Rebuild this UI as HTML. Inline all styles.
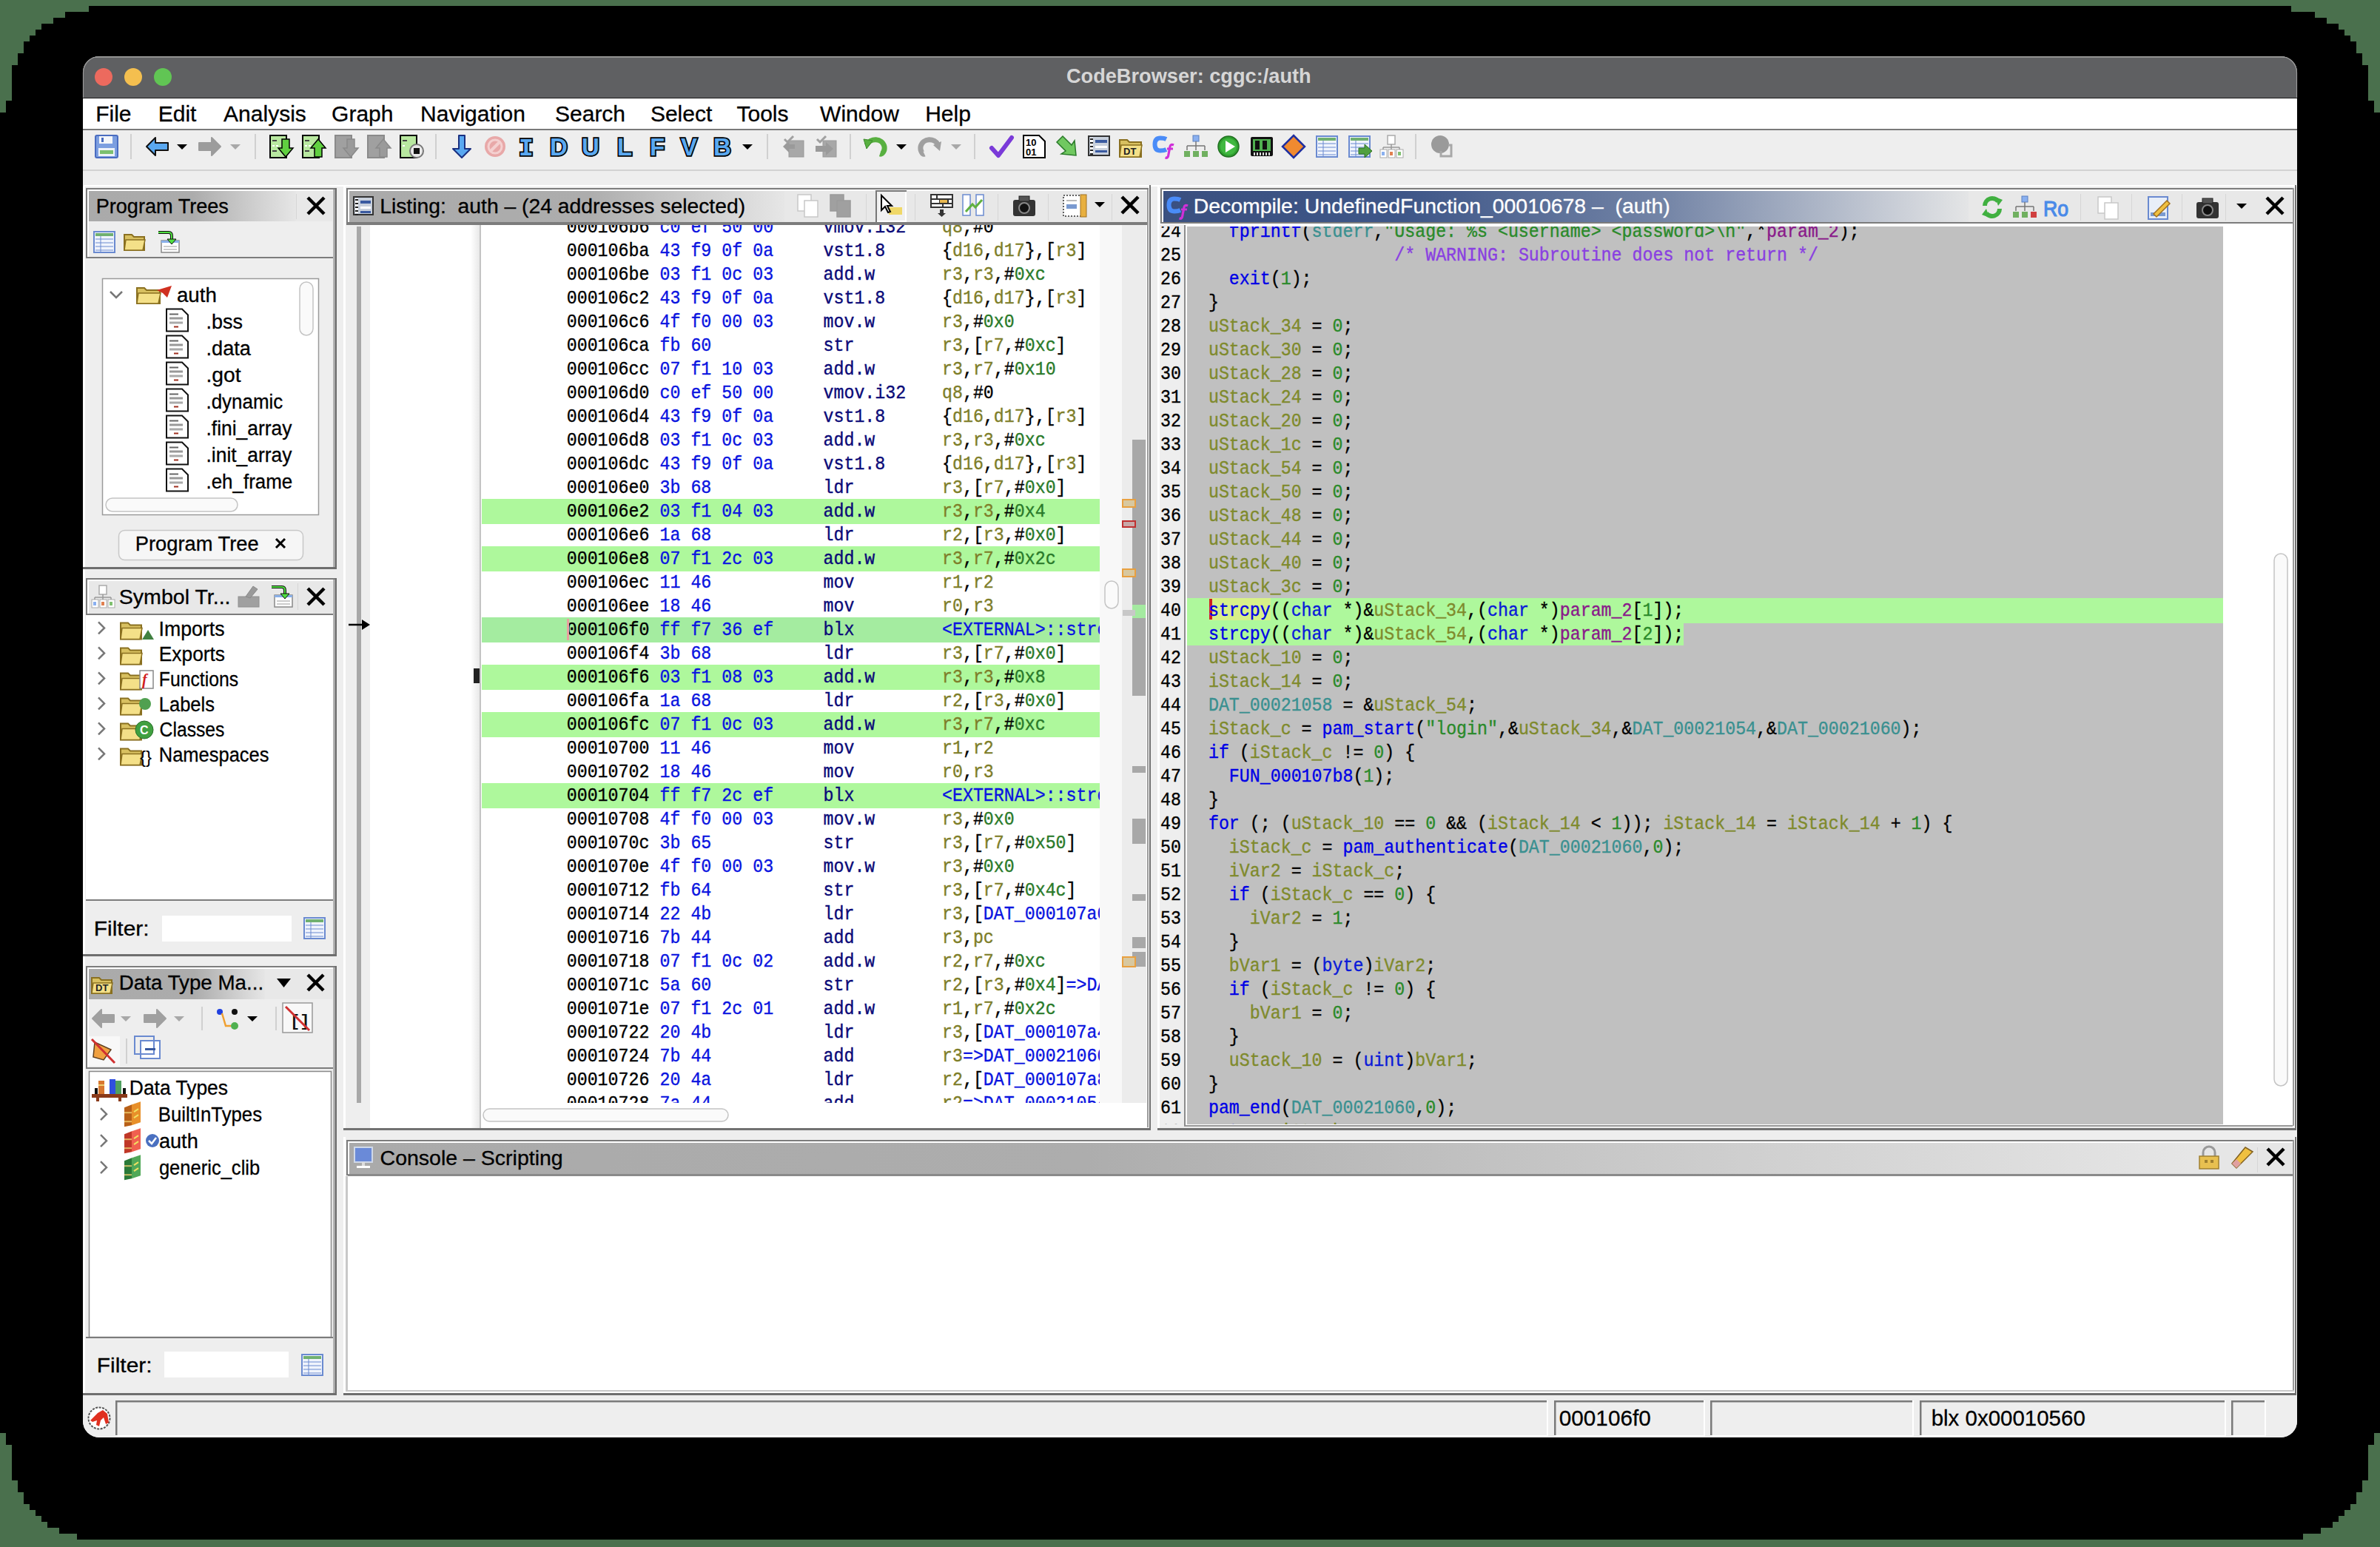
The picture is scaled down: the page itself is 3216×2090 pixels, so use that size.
<!DOCTYPE html>
<html><head><meta charset="utf-8"><title>CodeBrowser</title>
<style>html,body{margin:0;padding:0;background:#4d7250;overflow:hidden;width:3216px;height:2090px}svg{display:block;font-family:"Liberation Sans",sans-serif}</style>
</head><body>
<svg width="3216" height="2090" viewBox="0 0 3216 2090"><rect x="0" y="0" width="3216" height="2090" fill="#4a704d" />
<polygon fill="#000" points="120,8 120,16 88,16 88,24 72,24 72,32 56,32 56,40 48,40 48,48 40,48 40,56 32,56 32,72 24,72 24,88 16,88 16,136 8,136 8,152 0,152 0,1936 8,1936 8,1952 16,1952 16,2000 24,2000 24,2016 32,2016 32,2032 40,2032 40,2040 48,2040 48,2048 56,2048 56,2056 64,2056 64,2064 80,2064 80,2072 104,2072 104,2080 3112,2080 3112,2072 3136,2072 3136,2064 3152,2064 3152,2056 3160,2056 3160,2048 3168,2048 3168,2040 3176,2040 3176,2032 3184,2032 3184,2016 3192,2016 3192,2000 3200,2000 3200,1952 3208,1952 3208,1936 3216,1936 3216,152 3208,152 3208,136 3200,136 3200,88 3192,88 3192,72 3184,72 3184,56 3176,56 3176,48 3168,48 3168,40 3160,40 3160,32 3144,32 3144,24 3128,24 3128,16 3096,16 3096,8"/>
<defs><clipPath id="win"><rect x="112" y="76" width="2992" height="1866" rx="22" ry="22"/></clipPath><linearGradient id="hdrGray" x1="0" x2="1" y1="0" y2="0"><stop offset="0" stop-color="#a9a9a9"/><stop offset="0.45" stop-color="#ababab"/><stop offset="1" stop-color="#e8e8e8"/></linearGradient><linearGradient id="hdrBlue" x1="0" x2="1" y1="0" y2="0"><stop offset="0" stop-color="#3a5080"/><stop offset="0.3" stop-color="#40588a"/><stop offset="1" stop-color="#e6e6e6"/></linearGradient></defs>
<g clip-path="url(#win)">
<rect x="112" y="76" width="2992" height="1866" fill="#eeeeee" />
<rect x="112" y="76" width="2992" height="56" fill="#5f6062" />
<rect x="112" y="76" width="2992" height="2" fill="#8e8e8e" />
<circle cx="140" cy="104" r="12" fill="#ec6a5e"/>
<circle cx="180" cy="104" r="12" fill="#f4bf4f"/>
<circle cx="220" cy="104" r="12" fill="#61c554"/>
<text xml:space="preserve" x="1440.9" y="112" font-family="'Liberation Sans'" font-size="27" font-weight="bold" fill="#d6d6d6" textLength="330.8" lengthAdjust="spacingAndGlyphs" >CodeBrowser: cggc:/auth</text>
<rect x="112" y="132" width="2992" height="1" fill="#1a1a1a" />
<rect x="112" y="133" width="2992" height="41" fill="#ffffff" />
<rect x="112" y="174" width="2992" height="2" fill="#7a7a7a" />
<text xml:space="preserve" x="129.2" y="164" font-family="'Liberation Sans'" font-size="30" fill="#000" stroke="#000" stroke-width="0.3" >File</text>
<text xml:space="preserve" x="213.7" y="164" font-family="'Liberation Sans'" font-size="30" fill="#000" stroke="#000" stroke-width="0.3" >Edit</text>
<text xml:space="preserve" x="302.1" y="164" font-family="'Liberation Sans'" font-size="30" fill="#000" stroke="#000" stroke-width="0.3" >Analysis</text>
<text xml:space="preserve" x="448.1" y="164" font-family="'Liberation Sans'" font-size="30" fill="#000" stroke="#000" stroke-width="0.3" >Graph</text>
<text xml:space="preserve" x="568.1" y="164" font-family="'Liberation Sans'" font-size="30" fill="#000" stroke="#000" stroke-width="0.3" >Navigation</text>
<text xml:space="preserve" x="750.0" y="164" font-family="'Liberation Sans'" font-size="30" fill="#000" stroke="#000" stroke-width="0.3" >Search</text>
<text xml:space="preserve" x="878.9" y="164" font-family="'Liberation Sans'" font-size="30" fill="#000" stroke="#000" stroke-width="0.3" >Select</text>
<text xml:space="preserve" x="995.5" y="164" font-family="'Liberation Sans'" font-size="30" fill="#000" stroke="#000" stroke-width="0.3" >Tools</text>
<text xml:space="preserve" x="1108.1" y="164" font-family="'Liberation Sans'" font-size="30" fill="#000" stroke="#000" stroke-width="0.3" >Window</text>
<text xml:space="preserve" x="1250.2" y="164" font-family="'Liberation Sans'" font-size="30" fill="#000" stroke="#000" stroke-width="0.3" >Help</text>
<rect x="112" y="176" width="2992" height="53" fill="#eeeeee" />
<rect x="112" y="229" width="2992" height="2" fill="#d2d2d2" />
<g transform="translate(128,182)"><rect x="1" y="1" width="30" height="30" rx="2" fill="#7c9ee0" stroke="#4a6cc0" stroke-width="2"/><rect x="6" y="2" width="18" height="10" fill="#f4f6fa"/><rect x="9" y="4" width="3" height="6" fill="#4a6cc0"/><rect x="5" y="18" width="22" height="11" fill="#eef2f8"/><rect x="7" y="21" width="18" height="5" fill="#7cc070"/></g>
<rect x="176" y="181" width="2" height="34" fill="#d0d0d0"/>
<g transform="translate(196,182)"><polygon points="2,16 14,4 14,11 31,11 31,21 14,21 14,28" fill="#5aa8f0" stroke="#111" stroke-width="2" stroke-linejoin="round"/></g>
<g transform="translate(239,195)"><polygon points="0,0 14,0 7,7" fill="#000"/></g>
<g transform="translate(268,182)"><polygon points="30,16 18,4 18,11 1,11 1,21 18,21 18,28" fill="#9c9c9c" stroke="#9c9c9c" stroke-width="2" stroke-linejoin="round"/></g>
<g transform="translate(311,195)"><polygon points="0,0 14,0 7,7" fill="#a8a8a8"/></g>
<rect x="344" y="181" width="2" height="34" fill="#d0d0d0"/>
<g transform="translate(364,182)"><rect x="1" y="1" width="22" height="30" fill="#b8e8a0" stroke="#000" stroke-width="2"/><rect x="4" y="7" width="6" height="2" fill="#444"/><rect x="4" y="14" width="3" height="2" fill="#fff"/><rect x="9" y="14" width="3" height="2" fill="#fff"/><rect x="4" y="21" width="6" height="2" fill="#444"/><polygon points="17,6 27,6 27,18 32,18 22,30 12,18 17,18" fill="#60d040" stroke="#000" stroke-width="1.5"/></g>
<g transform="translate(408,182)"><rect x="1" y="1" width="22" height="30" fill="#b8e8a0" stroke="#000" stroke-width="2"/><rect x="4" y="7" width="6" height="2" fill="#444"/><rect x="4" y="14" width="3" height="2" fill="#fff"/><rect x="9" y="14" width="3" height="2" fill="#fff"/><rect x="4" y="21" width="6" height="2" fill="#444"/><polygon points="22,6 32,18 27,18 27,30 17,30 17,18 12,18" fill="#60d040" stroke="#000" stroke-width="1.5"/></g>
<g transform="translate(452,182)"><rect x="1" y="1" width="22" height="30" fill="#a0a0a0" stroke="#8a8a8a" stroke-width="2"/><polygon points="17,6 27,6 27,18 32,18 22,30 12,18 17,18" fill="#9a9a9a" stroke="#8a8a8a" stroke-width="1.5"/></g>
<g transform="translate(496,182)"><rect x="1" y="1" width="22" height="30" fill="#a0a0a0" stroke="#8a8a8a" stroke-width="2"/><polygon points="22,6 32,18 27,18 27,30 17,30 17,18 12,18" fill="#9a9a9a" stroke="#8a8a8a" stroke-width="1.5"/></g>
<g transform="translate(540,182)"><rect x="1" y="1" width="22" height="30" fill="#b8e8a0" stroke="#000" stroke-width="2"/><rect x="4" y="7" width="6" height="2" fill="#444"/><rect x="4" y="14" width="3" height="2" fill="#fff"/><circle cx="23" cy="22" r="9" fill="#e8e8e8" stroke="#777" stroke-width="2"/><rect x="19" y="18" width="8" height="8" fill="#111"/></g>
<rect x="588" y="181" width="2" height="34" fill="#d0d0d0"/>
<g transform="translate(611,182)"><polygon points="9,1 17,1 17,19 25,19 13,31 1,19 9,19" fill="#5aa8f0" stroke="#1a3080" stroke-width="2" stroke-linejoin="round"/></g>
<g transform="translate(654,182)"><circle cx="15" cy="16" r="14" fill="#e8a8a8"/><circle cx="15" cy="16" r="9" fill="none" stroke="#f4d0d0" stroke-width="3"/><line x1="9" y1="22" x2="21" y2="10" stroke="#f4d0d0" stroke-width="4"/></g>
<text x="701" y="210" font-family="'Liberation Mono'" font-weight="bold" font-size="33" fill="#5aa8f0" stroke="#000" stroke-width="3.5" paint-order="stroke" >I</text>
<text x="743" y="210" font-family="'Liberation Sans'" font-weight="bold" font-size="33" fill="#5aa8f0" stroke="#000" stroke-width="3.5" paint-order="stroke" >D</text>
<text x="786" y="210" font-family="'Liberation Sans'" font-weight="bold" font-size="33" fill="#5aa8f0" stroke="#000" stroke-width="3.5" paint-order="stroke" >U</text>
<text x="834" y="210" font-family="'Liberation Sans'" font-weight="bold" font-size="33" fill="#5aa8f0" stroke="#000" stroke-width="3.5" paint-order="stroke" >L</text>
<text x="878" y="210" font-family="'Liberation Sans'" font-weight="bold" font-size="33" fill="#5aa8f0" stroke="#000" stroke-width="3.5" paint-order="stroke" >F</text>
<text x="920" y="210" font-family="'Liberation Sans'" font-weight="bold" font-size="33" fill="#5aa8f0" stroke="#000" stroke-width="3.5" paint-order="stroke" >V</text>
<text x="964" y="210" font-family="'Liberation Sans'" font-weight="bold" font-size="33" fill="#5aa8f0" stroke="#000" stroke-width="3.5" paint-order="stroke" >B</text>
<g transform="translate(1003,195)"><polygon points="0,0 14,0 7,7" fill="#000"/></g>
<rect x="1036" y="181" width="2" height="34" fill="#d0d0d0"/>
<g transform="translate(1056,182)"><rect x="10" y="8" width="20" height="22" fill="#a8a8a8" stroke="#999" stroke-width="1"/><polygon points="2,16 10,8 10,13 18,13 18,19 10,19 10,24" fill="#9a9a9a"/><path d="M4 6 l4 4 l8 -8" stroke="#a0a0a0" stroke-width="3" fill="none"/></g>
<g transform="translate(1100,182)"><rect x="12" y="8" width="18" height="22" fill="#a8a8a8" stroke="#999" stroke-width="1"/><polygon points="26,19 16,10 16,15 2,15 2,23 16,23 16,28" fill="#9a9a9a"/><path d="M4 6 l4 4 l8 -8" stroke="#a0a0a0" stroke-width="3" fill="none"/></g>
<rect x="1148" y="181" width="2" height="34" fill="#d0d0d0"/>
<g transform="translate(1167,182)"><path d="M4 14 C 9 4, 25 4, 28 16 C 29 22, 25 27, 22 26" fill="none" stroke="#58b040" stroke-width="7"/><polygon points="0,6 12,8 4,19" fill="#58b040" stroke="#3a8a2a" stroke-width="1"/></g>
<g transform="translate(1211,195)"><polygon points="0,0 14,0 7,7" fill="#000"/></g>
<g transform="translate(1239,182)"><path d="M29 14 C 24 4, 8 4, 5 16 C 4 22, 8 27, 10 26" fill="none" stroke="#a0a0a0" stroke-width="7"/><polygon points="22,14 33,9 31,22" fill="#a0a0a0"/></g>
<g transform="translate(1285,195)"><polygon points="0,0 14,0 7,7" fill="#a8a8a8"/></g>
<rect x="1316" y="181" width="2" height="34" fill="#d0d0d0"/>
<g transform="translate(1337,182)"><path d="M3 18 L12 28 L30 4" fill="none" stroke="#7a3ad8" stroke-width="6" stroke-linecap="round" stroke-linejoin="round"/></g>
<g transform="translate(1382,182)"><path d="M1 1 H22 L30 9 V31 H1 Z" fill="#fff" stroke="#000" stroke-width="2"/><text x="4" y="15" font-family="'Liberation Sans'" font-weight="bold" font-size="13" fill="#000">10</text><text x="4" y="28" font-family="'Liberation Sans'" font-weight="bold" font-size="13" fill="#000">01</text></g>
<g transform="translate(1426,182)"><polygon points="2,10 10,2 22,14 26,8 28,28 8,26 14,22" fill="#70c860" stroke="#2a7a2a" stroke-width="1.5"/></g>
<g transform="translate(1470,182)"><rect x="1" y="2" width="28" height="26" fill="#c8d0dc" stroke="#333" stroke-width="2"/><rect x="3" y="4" width="4" height="22" fill="#fff"/><rect x="3" y="5" width="4" height="2" fill="#222"/><rect x="3" y="10" width="4" height="2" fill="#222"/><rect x="3" y="15" width="4" height="2" fill="#222"/><rect x="3" y="20" width="4" height="2" fill="#222"/><rect x="3" y="25" width="4" height="2" fill="#222"/><rect x="10" y="7" width="16" height="4" fill="#3a5aa0"/><rect x="10" y="15" width="16" height="3" fill="#fff"/><rect x="10" y="21" width="16" height="3" fill="#3a5aa0"/></g>
<g transform="translate(1512,184)"><path d="M1 5 H11 L14 8 H30 V28 H1 Z" fill="#d8c060" stroke="#8a7020" stroke-width="2"/><path d="M3 12 H31 L28 28 H1 Z" fill="#f4e088" stroke="#8a7020" stroke-width="1.5"/><text x="6" y="25" font-family="'Liberation Sans'" font-weight="bold" font-size="13" fill="#222">DT</text></g>
<g transform="translate(1557,182)"><path d="M19 6 Q16 4.5 11 4.5 Q3.5 4.5 3.5 13 Q3.5 21.5 11 21.5 Q16 21.5 19 20" fill="none" stroke="#4a8cf8" stroke-width="6"/><path d="M29 14 Q25 12 24 16 L21.5 29 Q20.5 32 17.5 31" fill="none" stroke="#d030d8" stroke-width="3.2"/><path d="M20 19 H28" stroke="#d030d8" stroke-width="2.8"/></g>
<g transform="translate(1599,182)"><rect x="13" y="1" width="8" height="8" fill="#8ab0f0" stroke="#5a80c0" stroke-width="1"/><path d="M17 9 V15 M5 15 H29 M5 15 V21 M17 15 V21 M29 15 V21" stroke="#777" stroke-width="1.5" fill="none"/><rect x="1" y="22" width="8" height="8" fill="#70b060"/><rect x="13" y="22" width="8" height="8" fill="#70b060"/><rect x="25" y="22" width="8" height="8" fill="#70b060"/></g>
<g transform="translate(1645,182)"><circle cx="15" cy="16" r="14" fill="#30a030" stroke="#207020" stroke-width="1.5"/><circle cx="15" cy="16" r="11" fill="#40b840"/><polygon points="11,8 24,16 11,24" fill="#fff"/></g>
<g transform="translate(1689,182)"><rect x="1" y="3" width="30" height="26" fill="#111" rx="2"/><rect x="4" y="6" width="24" height="16" fill="#50b050"/><rect x="7" y="8" width="6" height="12" fill="#111"/><rect x="17" y="8" width="6" height="12" fill="#111"/><rect x="5" y="24" width="2" height="4" fill="#ddd"/><rect x="9" y="24" width="2" height="4" fill="#ddd"/><rect x="13" y="24" width="2" height="4" fill="#ddd"/><rect x="17" y="24" width="2" height="4" fill="#ddd"/><rect x="21" y="24" width="2" height="4" fill="#ddd"/><rect x="25" y="24" width="2" height="4" fill="#ddd"/></g>
<g transform="translate(1732,182)"><polygon points="16,1 31,16 16,31 1,16" fill="#f08a30" stroke="#2030a0" stroke-width="2.5"/></g>
<g transform="translate(1778,182)"><rect x="1" y="2" width="28" height="28" fill="#f0f4fc" stroke="#6a8ad0" stroke-width="2"/><rect x="3" y="4" width="24" height="4" fill="#70b070"/><line x1="3" y1="12" x2="27" y2="12" stroke="#6a8ad0" stroke-width="1"/><line x1="3" y1="17" x2="27" y2="17" stroke="#6a8ad0" stroke-width="1"/><line x1="3" y1="22" x2="27" y2="22" stroke="#6a8ad0" stroke-width="1"/><line x1="3" y1="27" x2="27" y2="27" stroke="#6a8ad0" stroke-width="1"/><line x1="10" y1="8" x2="10" y2="29" stroke="#6a8ad0" stroke-width="1"/></g>
<g transform="translate(1822,182)"><rect x="1" y="2" width="28" height="28" fill="#f0f4fc" stroke="#6a8ad0" stroke-width="2"/><rect x="3" y="4" width="24" height="4" fill="#70b070"/><line x1="3" y1="12" x2="27" y2="12" stroke="#6a8ad0" stroke-width="1"/><line x1="3" y1="17" x2="27" y2="17" stroke="#6a8ad0" stroke-width="1"/><line x1="3" y1="22" x2="27" y2="22" stroke="#6a8ad0" stroke-width="1"/><line x1="3" y1="27" x2="27" y2="27" stroke="#6a8ad0" stroke-width="1"/><line x1="10" y1="8" x2="10" y2="29" stroke="#6a8ad0" stroke-width="1"/><polygon points="14,18 22,18 22,13 32,22 22,31 22,26 14,26" fill="#50a040" stroke="#2a7020" stroke-width="1"/></g>
<g transform="translate(1864,182)"><rect x="11" y="1" width="10" height="12" fill="#fff" stroke="#aaa" stroke-width="1.5"/><path d="M16 13 V17 M5 17 H27 M5 17 V20 M16 17 V20 M27 17 V20" stroke="#999" stroke-width="1.5" fill="none"/><rect x="1" y="20" width="9" height="11" fill="#fff" stroke="#aaa" stroke-width="1"/><rect x="3" y="23" width="4" height="5" fill="#8ab0f0"/><rect x="12" y="20" width="9" height="11" fill="#fff" stroke="#aaa" stroke-width="1"/><rect x="14" y="23" width="4" height="5" fill="#e08050"/><rect x="23" y="20" width="9" height="11" fill="#fff" stroke="#aaa" stroke-width="1"/><rect x="25" y="23" width="4" height="5" fill="#80c070"/></g>
<rect x="1912" y="181" width="2" height="34" fill="#d0d0d0"/>
<g transform="translate(1933,182)"><circle cx="13" cy="13" r="12" fill="#9a9a9a"/><path d="M14 22 V29 H28 V14 H24" stroke="#a8a8a8" stroke-width="3" fill="none"/></g>
<rect x="113" y="250" width="2991" height="2" fill="#ffffff" />
<rect x="112" y="252" width="3" height="1638" fill="#ffffff" />
<rect x="116" y="254" width="339" height="2" fill="#7c7c7c" />
<rect x="116" y="254" width="2" height="95" fill="#7c7c7c" />
<rect x="118" y="256" width="335" height="2" fill="#ffffff" />
<rect x="118" y="256" width="2" height="93" fill="#ffffff" />
<rect x="450" y="256" width="2.5" height="510" fill="#b4b4b4" />
<rect x="452.5" y="254" width="2.5" height="515" fill="#6e6e6e" />
<rect x="112" y="766" width="343" height="3" fill="#6e6e6e" />
<linearGradient id="gPT" gradientUnits="userSpaceOnUse" x1="120" x2="400" y1="0" y2="0"><stop offset="0" stop-color="#aaaaaa"/><stop offset="0.5" stop-color="#acacac"/><stop offset="1" stop-color="#e6e6e6"/></linearGradient>
<rect x="120" y="258" width="329" height="41" fill="url(#gPT)" />
<rect x="400" y="258" width="49" height="41" fill="#e8e8e8" />
<rect x="400" y="262" width="1" height="34" fill="#d6d6d6" />
<text xml:space="preserve" x="129.7" y="288" font-family="'Liberation Sans'" font-size="27" fill="#000" stroke="#000" stroke-width="0.3" textLength="179.2" lengthAdjust="spacingAndGlyphs" >Program Trees</text>
<path d="M416 267 L438 289 M438 267 L416 289" stroke="#000" stroke-width="4.5"/>
<rect x="120" y="299" width="329" height="48" fill="#eeeeee" />
<rect x="116" y="347" width="334" height="2" fill="#7c7c7c" />
<g transform="translate(126,311)"><rect x="1" y="2" width="28" height="28" fill="#f0f4fc" stroke="#6a8ad0" stroke-width="2"/><rect x="3" y="4" width="24" height="4" fill="#70b070"/><line x1="3" y1="12" x2="27" y2="12" stroke="#6a8ad0" stroke-width="1"/><line x1="3" y1="17" x2="27" y2="17" stroke="#6a8ad0" stroke-width="1"/><line x1="3" y1="22" x2="27" y2="22" stroke="#6a8ad0" stroke-width="1"/><line x1="3" y1="27" x2="27" y2="27" stroke="#6a8ad0" stroke-width="1"/><line x1="10" y1="8" x2="10" y2="29" stroke="#6a8ad0" stroke-width="1"/></g>
<g transform="translate(167,312)"><path d="M1 5 H11 L14 8 H28 V26 H1 Z" fill="#d8c060" stroke="#8a7020" stroke-width="2"/><path d="M3 12 H29 L26 26 H1 Z" fill="#f4e088" stroke="#8a7020" stroke-width="1.5"/></g>
<g transform="translate(212,311)"><rect x="6" y="14" width="24" height="16" fill="#fff" stroke="#888" stroke-width="1.5"/><rect x="6" y="14" width="24" height="3" fill="#8ab0e8"/><line x1="9" y1="22" x2="27" y2="22" stroke="#bbb" stroke-width="1.5"/><line x1="9" y1="26" x2="27" y2="26" stroke="#bbb" stroke-width="1.5"/><path d="M2 3 H16 Q20 3 20 8 V14" stroke="#111" stroke-width="4" fill="none"/><path d="M2 3 H16 Q20 3 20 8 V14" stroke="#50e040" stroke-width="2" fill="none"/><polygon points="14,12 26,12 20,19" fill="#50e040" stroke="#111" stroke-width="1"/></g>
<rect x="138" y="376" width="293" height="320" fill="#ffffff" />
<rect x="138.5" y="376.5" width="292" height="319" fill="none" stroke="#9a9a9a" stroke-width="1.5"/>
<path d="M149 394 L157 402 L165 394" stroke="#777" stroke-width="2.5" fill="none"/>
<g transform="translate(184,384)"><path d="M1 5 H11 L14 8 H32 V26 H1 Z" fill="#d8c060" stroke="#8a7020" stroke-width="2"/><path d="M3 12 H33 L30 26 H1 Z" fill="#f4e088" stroke="#8a7020" stroke-width="1.5"/></g>
<polygon points="212,392 232,386 226,402 220,396" fill="#d03020"/>
<text xml:space="preserve" x="238.9" y="407.5" font-family="'Liberation Sans'" font-size="27" fill="#000" stroke="#000" stroke-width="0.3" textLength="53.9" lengthAdjust="spacingAndGlyphs" >auth</text>
<g transform="translate(224,416.5)"><path d="M1 1 H22 L30 9 V31 H1 Z" fill="#fff" stroke="#111" stroke-width="2"/><rect x="5" y="7" width="12" height="2" fill="#666"/><rect x="5" y="12" width="18" height="3" fill="#999"/><rect x="5" y="18" width="18" height="3" fill="#aaa"/><rect x="11" y="24" width="6" height="2" fill="#a03020"/></g>
<text xml:space="preserve" x="278.5" y="443.5" font-family="'Liberation Sans'" font-size="27" fill="#000" stroke="#000" stroke-width="0.3" textLength="49.4" lengthAdjust="spacingAndGlyphs" >.bss</text>
<g transform="translate(224,452.5)"><path d="M1 1 H22 L30 9 V31 H1 Z" fill="#fff" stroke="#111" stroke-width="2"/><rect x="5" y="7" width="12" height="2" fill="#666"/><rect x="5" y="12" width="18" height="3" fill="#999"/><rect x="5" y="18" width="18" height="3" fill="#aaa"/><rect x="11" y="24" width="6" height="2" fill="#a03020"/></g>
<text xml:space="preserve" x="278.5" y="479.5" font-family="'Liberation Sans'" font-size="27" fill="#000" stroke="#000" stroke-width="0.3" textLength="60.5" lengthAdjust="spacingAndGlyphs" >.data</text>
<g transform="translate(224,488.5)"><path d="M1 1 H22 L30 9 V31 H1 Z" fill="#fff" stroke="#111" stroke-width="2"/><rect x="5" y="7" width="12" height="2" fill="#666"/><rect x="5" y="12" width="18" height="3" fill="#999"/><rect x="5" y="18" width="18" height="3" fill="#aaa"/><rect x="11" y="24" width="6" height="2" fill="#a03020"/></g>
<text xml:space="preserve" x="278.5" y="515.5" font-family="'Liberation Sans'" font-size="27" fill="#000" stroke="#000" stroke-width="0.3" textLength="47.2" lengthAdjust="spacingAndGlyphs" >.got</text>
<g transform="translate(224,524.5)"><path d="M1 1 H22 L30 9 V31 H1 Z" fill="#fff" stroke="#111" stroke-width="2"/><rect x="5" y="7" width="12" height="2" fill="#666"/><rect x="5" y="12" width="18" height="3" fill="#999"/><rect x="5" y="18" width="18" height="3" fill="#aaa"/><rect x="11" y="24" width="6" height="2" fill="#a03020"/></g>
<text xml:space="preserve" x="278.5" y="551.5" font-family="'Liberation Sans'" font-size="27" fill="#000" stroke="#000" stroke-width="0.3" textLength="103.7" lengthAdjust="spacingAndGlyphs" >.dynamic</text>
<g transform="translate(224,560.5)"><path d="M1 1 H22 L30 9 V31 H1 Z" fill="#fff" stroke="#111" stroke-width="2"/><rect x="5" y="7" width="12" height="2" fill="#666"/><rect x="5" y="12" width="18" height="3" fill="#999"/><rect x="5" y="18" width="18" height="3" fill="#aaa"/><rect x="11" y="24" width="6" height="2" fill="#a03020"/></g>
<text xml:space="preserve" x="278.5" y="587.5" font-family="'Liberation Sans'" font-size="27" fill="#000" stroke="#000" stroke-width="0.3" textLength="115.9" lengthAdjust="spacingAndGlyphs" >.fini_array</text>
<g transform="translate(224,596.5)"><path d="M1 1 H22 L30 9 V31 H1 Z" fill="#fff" stroke="#111" stroke-width="2"/><rect x="5" y="7" width="12" height="2" fill="#666"/><rect x="5" y="12" width="18" height="3" fill="#999"/><rect x="5" y="18" width="18" height="3" fill="#aaa"/><rect x="11" y="24" width="6" height="2" fill="#a03020"/></g>
<text xml:space="preserve" x="278.5" y="623.5" font-family="'Liberation Sans'" font-size="27" fill="#000" stroke="#000" stroke-width="0.3" textLength="115.9" lengthAdjust="spacingAndGlyphs" >.init_array</text>
<g transform="translate(224,632.5)"><path d="M1 1 H22 L30 9 V31 H1 Z" fill="#fff" stroke="#111" stroke-width="2"/><rect x="5" y="7" width="12" height="2" fill="#666"/><rect x="5" y="12" width="18" height="3" fill="#999"/><rect x="5" y="18" width="18" height="3" fill="#aaa"/><rect x="11" y="24" width="6" height="2" fill="#a03020"/></g>
<text xml:space="preserve" x="278.5" y="659.5" font-family="'Liberation Sans'" font-size="27" fill="#000" stroke="#000" stroke-width="0.3" textLength="116.7" lengthAdjust="spacingAndGlyphs" >.eh_frame</text>
<rect x="405" y="381" width="18" height="72" rx="9" fill="#fafafa" stroke="#c4c4c4" stroke-width="1.5"/>
<rect x="143" y="673" width="178" height="18" rx="9" fill="#fafafa" stroke="#c4c4c4" stroke-width="1.5"/>
<rect x="160.5" y="716.5" width="249" height="40" rx="8" fill="#f6f6f6" stroke="#c8c8c8" stroke-width="1.5"/>
<text xml:space="preserve" x="182.8" y="744" font-family="'Liberation Sans'" font-size="27" fill="#000" stroke="#000" stroke-width="0.3" textLength="166.8" lengthAdjust="spacingAndGlyphs" >Program Tree</text>
<path d="M373 728 L385 740 M385 728 L373 740" stroke="#000" stroke-width="3"/>
<rect x="116" y="781" width="339" height="2" fill="#7c7c7c" />
<rect x="116" y="781" width="2" height="50" fill="#7c7c7c" />
<rect x="118" y="783" width="335" height="2" fill="#ffffff" />
<rect x="118" y="783" width="2" height="48" fill="#ffffff" />
<rect x="450" y="783" width="2.5" height="506" fill="#b4b4b4" />
<rect x="452.5" y="781" width="2.5" height="511" fill="#6e6e6e" />
<rect x="112" y="1289" width="343" height="3" fill="#6e6e6e" />
<rect x="120" y="785" width="329" height="45" fill="#e8e8e8" />
<g transform="translate(123,790)"><rect x="11" y="1" width="10" height="12" fill="#fff" stroke="#aaa" stroke-width="1.5"/><path d="M16 13 V17 M5 17 H27 M5 17 V20 M16 17 V20 M27 17 V20" stroke="#999" stroke-width="1.5" fill="none"/><rect x="1" y="20" width="9" height="11" fill="#fff" stroke="#aaa" stroke-width="1"/><rect x="3" y="23" width="4" height="5" fill="#8ab0f0"/><rect x="12" y="20" width="9" height="11" fill="#fff" stroke="#aaa" stroke-width="1"/><rect x="14" y="23" width="4" height="5" fill="#e08050"/><rect x="23" y="20" width="9" height="11" fill="#fff" stroke="#aaa" stroke-width="1"/><rect x="25" y="23" width="4" height="5" fill="#80c070"/></g>
<text xml:space="preserve" x="160.8" y="816" font-family="'Liberation Sans'" font-size="27" fill="#000" stroke="#000" stroke-width="0.3" textLength="150.7" lengthAdjust="spacingAndGlyphs" >Symbol Tr...</text>
<g transform="translate(320,790)"><rect x="2" y="16" width="28" height="14" fill="#a0a0a0" stroke="#909090" stroke-width="1"/><path d="M12 16 L22 2 L28 6 L18 18 Z" fill="#9a9a9a" stroke="#888" stroke-width="1"/></g>
<g transform="translate(365,790)"><rect x="6" y="14" width="24" height="16" fill="#fff" stroke="#888" stroke-width="1.5"/><rect x="6" y="14" width="24" height="3" fill="#8ab0e8"/><line x1="9" y1="22" x2="27" y2="22" stroke="#bbb" stroke-width="1.5"/><line x1="9" y1="26" x2="27" y2="26" stroke="#bbb" stroke-width="1.5"/><path d="M2 3 H16 Q20 3 20 8 V14" stroke="#111" stroke-width="4" fill="none"/><path d="M2 3 H16 Q20 3 20 8 V14" stroke="#50e040" stroke-width="2" fill="none"/><polygon points="14,12 26,12 20,19" fill="#50e040" stroke="#111" stroke-width="1"/></g>
<rect x="402" y="788" width="1" height="36" fill="#d6d6d6" />
<path d="M416 795 L438 817 M438 795 L416 817" stroke="#000" stroke-width="4.5"/>
<rect x="116" y="829" width="334" height="2" fill="#7c7c7c" />
<rect x="116" y="831" width="334" height="384" fill="#ffffff" />
<path d="M133 840.4 L141 848.4 L133 856.4" stroke="#777" stroke-width="2.5" fill="none"/>
<g transform="translate(162,836.4)"><path d="M1 5 H11 L14 8 H29 V27 H1 Z" fill="#d8c060" stroke="#8a7020" stroke-width="2"/><path d="M3 12 H30 L27 27 H1 Z" fill="#f4e088" stroke="#8a7020" stroke-width="1.5"/></g>
<text xml:space="preserve" x="214.5" y="859.4" font-family="'Liberation Sans'" font-size="27" fill="#000" stroke="#000" stroke-width="0.3" textLength="89.0" lengthAdjust="spacingAndGlyphs" >Imports</text>
<path d="M133 874.4 L141 882.4 L133 890.4" stroke="#777" stroke-width="2.5" fill="none"/>
<g transform="translate(162,870.4)"><path d="M1 5 H11 L14 8 H29 V27 H1 Z" fill="#d8c060" stroke="#8a7020" stroke-width="2"/><path d="M3 12 H30 L27 27 H1 Z" fill="#f4e088" stroke="#8a7020" stroke-width="1.5"/></g>
<text xml:space="preserve" x="214.8" y="893.4" font-family="'Liberation Sans'" font-size="27" fill="#000" stroke="#000" stroke-width="0.3" textLength="89.2" lengthAdjust="spacingAndGlyphs" >Exports</text>
<path d="M133 908.4 L141 916.4 L133 924.4" stroke="#777" stroke-width="2.5" fill="none"/>
<g transform="translate(162,904.4)"><path d="M1 5 H11 L14 8 H29 V27 H1 Z" fill="#d8c060" stroke="#8a7020" stroke-width="2"/><path d="M3 12 H30 L27 27 H1 Z" fill="#f4e088" stroke="#8a7020" stroke-width="1.5"/></g>
<text xml:space="preserve" x="214.8" y="927.4" font-family="'Liberation Sans'" font-size="27" fill="#000" stroke="#000" stroke-width="0.3" textLength="107.2" lengthAdjust="spacingAndGlyphs" >Functions</text>
<path d="M133 942.4 L141 950.4 L133 958.4" stroke="#777" stroke-width="2.5" fill="none"/>
<g transform="translate(162,938.4)"><path d="M1 5 H11 L14 8 H29 V27 H1 Z" fill="#d8c060" stroke="#8a7020" stroke-width="2"/><path d="M3 12 H30 L27 27 H1 Z" fill="#f4e088" stroke="#8a7020" stroke-width="1.5"/></g>
<text xml:space="preserve" x="214.8" y="961.4" font-family="'Liberation Sans'" font-size="27" fill="#000" stroke="#000" stroke-width="0.3" textLength="75.2" lengthAdjust="spacingAndGlyphs" >Labels</text>
<path d="M133 976.4 L141 984.4 L133 992.4" stroke="#777" stroke-width="2.5" fill="none"/>
<g transform="translate(162,972.4)"><path d="M1 5 H11 L14 8 H29 V27 H1 Z" fill="#d8c060" stroke="#8a7020" stroke-width="2"/><path d="M3 12 H30 L27 27 H1 Z" fill="#f4e088" stroke="#8a7020" stroke-width="1.5"/></g>
<text xml:space="preserve" x="215.6" y="995.4" font-family="'Liberation Sans'" font-size="27" fill="#000" stroke="#000" stroke-width="0.3" textLength="87.8" lengthAdjust="spacingAndGlyphs" >Classes</text>
<path d="M133 1010.4000000000001 L141 1018.4000000000001 L133 1026.4" stroke="#777" stroke-width="2.5" fill="none"/>
<g transform="translate(162,1006.4000000000001)"><path d="M1 5 H11 L14 8 H29 V27 H1 Z" fill="#d8c060" stroke="#8a7020" stroke-width="2"/><path d="M3 12 H30 L27 27 H1 Z" fill="#f4e088" stroke="#8a7020" stroke-width="1.5"/></g>
<text xml:space="preserve" x="214.8" y="1029.4" font-family="'Liberation Sans'" font-size="27" fill="#000" stroke="#000" stroke-width="0.3" textLength="148.7" lengthAdjust="spacingAndGlyphs" >Namespaces</text>
<polygon points="192,864 200,851 208,864" fill="#408040"/>
<rect x="189" y="906" width="18" height="24" fill="#fff" stroke="#888" stroke-width="1.5"/><text x="192" y="925" font-family="'Liberation Serif'" font-style="italic" font-weight="bold" font-size="20" fill="#d02020">f</text>
<circle cx="196" cy="951" r="8" fill="#50a050"/>
<circle cx="195" cy="986" r="12" fill="#40a040" stroke="#2a702a"/><text x="189" y="992" font-family="'Liberation Sans'" font-weight="bold" font-size="16" fill="#fff">C</text>
<text x="189" y="1031" font-family="'Liberation Sans'" font-size="24" fill="#000">{}</text>
<rect x="116" y="1215" width="334" height="2" fill="#7c7c7c" />
<rect x="120" y="1217" width="329" height="70" fill="#eeeeee" />
<text xml:space="preserve" x="126.8" y="1264" font-family="'Liberation Sans'" font-size="27" fill="#000" stroke="#000" stroke-width="0.3" textLength="74.7" lengthAdjust="spacingAndGlyphs" >Filter:</text>
<rect x="219" y="1237" width="175" height="35" fill="#ffffff" />
<g transform="translate(410,1238)"><rect x="1" y="2" width="28" height="28" fill="#f0f4fc" stroke="#6a8ad0" stroke-width="2"/><rect x="3" y="4" width="24" height="4" fill="#70b070"/><line x1="3" y1="12" x2="27" y2="12" stroke="#6a8ad0" stroke-width="1"/><line x1="3" y1="17" x2="27" y2="17" stroke="#6a8ad0" stroke-width="1"/><line x1="3" y1="22" x2="27" y2="22" stroke="#6a8ad0" stroke-width="1"/><line x1="3" y1="27" x2="27" y2="27" stroke="#6a8ad0" stroke-width="1"/><line x1="10" y1="8" x2="10" y2="29" stroke="#6a8ad0" stroke-width="1"/></g>
<rect x="116" y="1305" width="339" height="2" fill="#7c7c7c" />
<rect x="116" y="1305" width="2" height="139" fill="#7c7c7c" />
<rect x="118" y="1307" width="335" height="2" fill="#ffffff" />
<rect x="118" y="1307" width="2" height="137" fill="#ffffff" />
<rect x="450" y="1307" width="2.5" height="575" fill="#b4b4b4" />
<rect x="452.5" y="1305" width="2.5" height="580" fill="#6e6e6e" />
<rect x="112" y="1882" width="343" height="3" fill="#6e6e6e" />
<linearGradient id="gDT" gradientUnits="userSpaceOnUse" x1="120" x2="358" y1="0" y2="0"><stop offset="0" stop-color="#aaaaaa"/><stop offset="0.6" stop-color="#acacac"/><stop offset="1" stop-color="#e6e6e6"/></linearGradient>
<rect x="120" y="1309" width="329" height="41" fill="#e8e8e8" />
<rect x="120" y="1309" width="238" height="41" fill="url(#gDT)" />
<g transform="translate(123,1316)"><path d="M1 5 H11 L14 8 H28 V26 H1 Z" fill="#d8c060" stroke="#8a7020" stroke-width="2"/><path d="M3 12 H29 L26 26 H1 Z" fill="#f4e088" stroke="#8a7020" stroke-width="1.5"/><text x="6" y="23" font-family="'Liberation Sans'" font-weight="bold" font-size="13" fill="#222">DT</text></g>
<text xml:space="preserve" x="160.8" y="1337" font-family="'Liberation Sans'" font-size="27" fill="#000" stroke="#000" stroke-width="0.3" textLength="195.4" lengthAdjust="spacingAndGlyphs" >Data Type Ma...</text>
<polygon points="374,1322 393,1322 383.5,1334" fill="#000"/>
<path d="M416 1317 L437 1338 M437 1317 L416 1338" stroke="#000" stroke-width="4.5"/>
<rect x="120" y="1350" width="329" height="92" fill="#eeeeee" />
<g transform="translate(123,1360)"><polygon points="2,16 14,4 14,11 31,11 31,21 14,21 14,28" fill="#a0a0a0" stroke="#a0a0a0" stroke-width="2" stroke-linejoin="round"/></g>
<g transform="translate(163,1373)"><polygon points="0,0 14,0 7,7" fill="#a8a8a8"/></g>
<g transform="translate(194,1360)"><polygon points="30,16 18,4 18,11 1,11 1,21 18,21 18,28" fill="#a0a0a0" stroke="#a0a0a0" stroke-width="2" stroke-linejoin="round"/></g>
<g transform="translate(235,1373)"><polygon points="0,0 14,0 7,7" fill="#a8a8a8"/></g>
<rect x="272" y="1360" width="2" height="32" fill="#d0d0d0" />
<circle cx="297" cy="1367" r="4" fill="#2040e0"/><circle cx="317" cy="1367" r="4" fill="#111"/><circle cx="317" cy="1386" r="5" fill="#50b050"/><path d="M300 1369 L305 1386 H312" stroke="#f0a030" stroke-width="2.5" fill="none"/>
<g transform="translate(334,1373)"><polygon points="0,0 14,0 7,7" fill="#000"/></g>
<rect x="372" y="1360" width="2" height="32" fill="#d0d0d0" />
<rect x="382" y="1355" width="40" height="40" fill="#f8f8f8" stroke="#999" stroke-width="1.5"/><text x="392" y="1386" font-family="'Liberation Mono'" font-weight="bold" font-size="22" fill="#111">[]</text><line x1="386" y1="1360" x2="418" y2="1392" stroke="#d03030" stroke-width="3"/>
<rect x="120" y="1400" width="42" height="40" fill="#f8f8f8"/><path d="M128 1408 L150 1418 L140 1432 L126 1428 Z" fill="#f0a040" stroke="#604020" stroke-width="1.5"/><line x1="124" y1="1404" x2="155" y2="1436" stroke="#d03030" stroke-width="3"/>
<rect x="170" y="1403" width="2" height="34" fill="#d0d0d0" />
<rect x="190" y="1406" width="26" height="24" fill="#fff" stroke="#6a8ad0" stroke-width="2"/><rect x="182" y="1400" width="26" height="24" fill="none" stroke="#6a8ad0" stroke-width="2"/><rect x="196" y="1416" width="14" height="3" fill="#3a5aa0"/>
<rect x="116" y="1442" width="334" height="2" fill="#7c7c7c" />
<rect x="120" y="1444" width="329" height="3" fill="#eeeeee" />
<rect x="120.5" y="1447.5" width="327" height="359" fill="#ffffff" stroke="#8a8a8a" stroke-width="1.5"/>
<rect x="124" y="1478" width="48" height="5" fill="#8a3a1a"/><rect x="130" y="1483" width="4" height="5" fill="#8a3a1a"/><rect x="160" y="1483" width="4" height="5" fill="#8a3a1a"/><rect x="128" y="1470" width="4" height="8" fill="#111"/><rect x="166" y="1470" width="4" height="8" fill="#111"/><rect x="133" y="1460" width="8" height="18" fill="#d87830"/><rect x="133" y="1465" width="8" height="2" fill="#f0d070"/><rect x="148" y="1458" width="8" height="20" fill="#3050e0"/><rect x="156" y="1460" width="8" height="18" fill="#50a060"/>
<text xml:space="preserve" x="174.8" y="1478.9" font-family="'Liberation Sans'" font-size="27" fill="#000" stroke="#000" stroke-width="0.3" textLength="133.2" lengthAdjust="spacingAndGlyphs" >Data Types</text>
<path d="M136 1497.2 L144 1505.2 L136 1513.2" stroke="#777" stroke-width="2.5" fill="none"/>
<polygon points="168,1496.2 178,1492.2 178,1520.2 168,1522.2" fill="#b86018"/><polygon points="178,1492.2 190,1488.2 190,1516.2 178,1520.2" fill="#e8902a"/><polygon points="168,1496.2 178,1492.2 190,1488.2 180,1491.2" fill="#f4f0e0"/>
<path d="M181 1502.2 L187 1498.2 M181 1510.2 L187 1506.2" stroke="#f0e060" stroke-width="2"/><rect x="168" y="1502.2" width="10" height="2" fill="#f0d070" opacity="0.8"/><rect x="168" y="1514.2" width="10" height="2" fill="#f0d070" opacity="0.8"/>
<text xml:space="preserve" x="213.8" y="1515.2" font-family="'Liberation Sans'" font-size="27" fill="#000" stroke="#000" stroke-width="0.3" textLength="140.2" lengthAdjust="spacingAndGlyphs" >BuiltInTypes</text>
<path d="M136 1533.2 L144 1541.2 L136 1549.2" stroke="#777" stroke-width="2.5" fill="none"/>
<polygon points="168,1532.2 178,1528.2 178,1556.2 168,1558.2" fill="#c03828"/><polygon points="178,1528.2 190,1524.2 190,1552.2 178,1556.2" fill="#f06050"/><polygon points="168,1532.2 178,1528.2 190,1524.2 180,1527.2" fill="#f4f0e0"/>
<path d="M181 1538.2 L187 1534.2 M181 1546.2 L187 1542.2" stroke="#f0e060" stroke-width="2"/><rect x="168" y="1538.2" width="10" height="2" fill="#f0d070" opacity="0.8"/><rect x="168" y="1550.2" width="10" height="2" fill="#f0d070" opacity="0.8"/>
<text xml:space="preserve" x="214.9" y="1551.2" font-family="'Liberation Sans'" font-size="27" fill="#000" stroke="#000" stroke-width="0.3" textLength="52.9" lengthAdjust="spacingAndGlyphs" >auth</text>
<path d="M136 1569.2 L144 1577.2 L136 1585.2" stroke="#777" stroke-width="2.5" fill="none"/>
<polygon points="168,1568.2 178,1564.2 178,1592.2 168,1594.2" fill="#2a7a38"/><polygon points="178,1564.2 190,1560.2 190,1588.2 178,1592.2" fill="#50a858"/><polygon points="168,1568.2 178,1564.2 190,1560.2 180,1563.2" fill="#f4f0e0"/>
<path d="M181 1574.2 L187 1570.2 M181 1582.2 L187 1578.2" stroke="#f0e060" stroke-width="2"/><rect x="168" y="1574.2" width="10" height="2" fill="#f0d070" opacity="0.8"/><rect x="168" y="1586.2" width="10" height="2" fill="#f0d070" opacity="0.8"/>
<text xml:space="preserve" x="214.9" y="1587.2" font-family="'Liberation Sans'" font-size="27" fill="#000" stroke="#000" stroke-width="0.3" textLength="136.3" lengthAdjust="spacingAndGlyphs" >generic_clib</text>
<circle cx="206" cy="1541" r="9" fill="#4a70c0"/><path d="M201 1541 L205 1545 L211 1537" stroke="#fff" stroke-width="2.5" fill="none"/>
<rect x="116" y="1806" width="334" height="2" fill="#7c7c7c" />
<rect x="120" y="1808" width="329" height="70" fill="#eeeeee" />
<text xml:space="preserve" x="130.8" y="1854" font-family="'Liberation Sans'" font-size="27" fill="#000" stroke="#000" stroke-width="0.3" textLength="74.7" lengthAdjust="spacingAndGlyphs" >Filter:</text>
<rect x="222" y="1826" width="168" height="35" fill="#ffffff" />
<g transform="translate(407,1828)"><rect x="1" y="2" width="28" height="28" fill="#f0f4fc" stroke="#6a8ad0" stroke-width="2"/><rect x="3" y="4" width="24" height="4" fill="#70b070"/><line x1="3" y1="12" x2="27" y2="12" stroke="#6a8ad0" stroke-width="1"/><line x1="3" y1="17" x2="27" y2="17" stroke="#6a8ad0" stroke-width="1"/><line x1="3" y1="22" x2="27" y2="22" stroke="#6a8ad0" stroke-width="1"/><line x1="3" y1="27" x2="27" y2="27" stroke="#6a8ad0" stroke-width="1"/><line x1="10" y1="8" x2="10" y2="29" stroke="#6a8ad0" stroke-width="1"/></g>
<rect x="464" y="250" width="3" height="1274" fill="#ffffff" />
<rect x="468" y="254" width="1084" height="2" fill="#7c7c7c" />
<rect x="468" y="254" width="2" height="50" fill="#7c7c7c" />
<rect x="470" y="256" width="1080" height="2" fill="#ffffff" />
<rect x="470" y="256" width="2" height="44" fill="#ffffff" />
<linearGradient id="gLS" gradientUnits="userSpaceOnUse" x1="472" x2="1060" y1="0" y2="0"><stop offset="0" stop-color="#aaaaaa"/><stop offset="0.55" stop-color="#adadad"/><stop offset="1" stop-color="#e6e6e6"/></linearGradient>
<rect x="472" y="258" width="1077" height="42" fill="#e8e8e8" />
<rect x="472" y="258" width="588" height="42" fill="url(#gLS)" />
<g transform="translate(477,264)"><rect x="1" y="2" width="26" height="24" fill="#c8d0dc" stroke="#333" stroke-width="2"/><rect x="3" y="4" width="4" height="20" fill="#fff"/><rect x="3" y="5" width="4" height="2" fill="#222"/><rect x="3" y="10" width="4" height="2" fill="#222"/><rect x="3" y="15" width="4" height="2" fill="#222"/><rect x="3" y="20" width="4" height="2" fill="#222"/><rect x="3" y="25" width="4" height="2" fill="#222"/><rect x="10" y="7" width="14" height="4" fill="#3a5aa0"/><rect x="10" y="15" width="14" height="3" fill="#fff"/><rect x="10" y="21" width="14" height="3" fill="#3a5aa0"/></g>
<text xml:space="preserve" x="513.2" y="288" font-family="'Liberation Sans'" font-size="27" fill="#000" stroke="#000" stroke-width="0.3" textLength="493.9" lengthAdjust="spacingAndGlyphs" >Listing:  auth – (24 addresses selected)</text>
<g transform="translate(1077,262)"><rect x="1" y="1" width="18" height="22" fill="#fff" stroke="#c8c8c8" stroke-width="1.5"/><rect x="10" y="9" width="18" height="22" fill="#fff" stroke="#c8c8c8" stroke-width="1.5"/></g>
<g transform="translate(1121,262)"><rect x="1" y="1" width="18" height="22" fill="#a0a0a0" stroke="#9a9a9a" stroke-width="1.5"/><rect x="10" y="9" width="18" height="22" fill="#a0a0a0" stroke="#9a9a9a" stroke-width="1.5"/></g>
<rect x="1170" y="262" width="1" height="36" fill="#d6d6d6" />
<rect x="1183" y="257" width="42" height="43" fill="#f0f0f0"/><rect x="1183" y="257" width="42" height="2" fill="#777"/><rect x="1183" y="257" width="2" height="43" fill="#777"/><rect x="1185" y="298" width="40" height="2" fill="#fff"/><rect x="1223" y="259" width="2" height="41" fill="#fff"/>
<g transform="translate(1189,262)"><rect x="12" y="18" width="18" height="10" fill="#f0d868"/><path d="M2 2 L2 22 L7 17 L11 25 L14 24 L10 16 L16 16 Z" fill="#fff" stroke="#000" stroke-width="2"/></g>
<rect x="1236" y="262" width="1" height="36" fill="#d6d6d6" />
<g transform="translate(1256,261)"><rect x="1" y="1" width="31" height="19" fill="#333"/><rect x="3" y="3" width="6" height="4" fill="#fff"/><rect x="11" y="3" width="19" height="4" fill="#fff"/><rect x="3" y="9" width="10" height="4" fill="#fff"/><rect x="14" y="9" width="10" height="4" fill="#e8b850"/><rect x="26" y="9" width="4" height="4" fill="#fff"/><rect x="3" y="15" width="14" height="3" fill="#fff"/><rect x="19" y="15" width="11" height="3" fill="#fff"/><polygon points="11,27 22,27 16.5,32" fill="#333"/><rect x="14" y="22" width="5" height="6" fill="#333"/></g>
<g transform="translate(1300,262)"><rect x="1" y="1" width="10" height="28" fill="#fff" stroke="#6a8ad0" stroke-width="1.5"/><rect x="19" y="1" width="10" height="28" fill="#fff" stroke="#6a8ad0" stroke-width="1.5"/><path d="M5 24 L14 14 L18 18 L27 8" stroke="#60b040" stroke-width="3" fill="none"/></g>
<rect x="1348" y="262" width="1" height="36" fill="#d6d6d6" />
<g transform="translate(1368,262)"><rect x="1" y="8" width="30" height="22" rx="3" fill="#333"/><rect x="9" y="3" width="14" height="7" fill="#555" stroke="#222"/><circle cx="16" cy="19" r="7" fill="#111" stroke="#888" stroke-width="2"/></g>
<rect x="1416" y="262" width="1" height="36" fill="#d6d6d6" />
<g transform="translate(1436,262)"><rect x="1" y="2" width="24" height="28" fill="#fff" stroke="#333" stroke-width="1.5" stroke-dasharray="2 2"/><rect x="5" y="14" width="14" height="6" fill="#7a9ad0"/><rect x="5" y="8" width="14" height="2" fill="#bbb"/><rect x="24" y="1" width="8" height="30" fill="#e8b040" stroke="#a07020" stroke-width="1"/></g>
<g transform="translate(1479,273)"><polygon points="0,0 14,0 7,7" fill="#000"/></g>
<rect x="1502" y="262" width="1" height="36" fill="#d6d6d6" />
<path d="M1516 266 L1538 288 M1538 266 L1516 288" stroke="#000" stroke-width="4.5"/>
<rect x="470" y="300" width="1082" height="4" fill="#7c7c7c" />
<rect x="467" y="304" width="1083" height="1220" fill="#ffffff" />
<rect x="467" y="304" width="33" height="1220" fill="#eeeeee" />
<rect x="1550" y="256" width="2" height="1267" fill="#9a9a9a" />
<rect x="1552" y="250" width="1" height="1274" fill="#ffffff" />
<rect x="1553" y="250" width="2" height="1277" fill="#727272" />
<rect x="464" y="1524" width="1091" height="3" fill="#727272" />
<rect x="482" y="306" width="6" height="1184" fill="#a8a8a8" />
<linearGradient id="gMg" x1="0" x2="1" y1="0" y2="0"><stop offset="0" stop-color="#ffffff"/><stop offset="1" stop-color="#e8e8e8"/></linearGradient>
<rect x="636" y="304" width="12" height="1220" fill="url(#gMg)" />
<rect x="648" y="304" width="2" height="1220" fill="#c4c4c4" />
<rect x="1486" y="304" width="30" height="1186" fill="#f8f8f8" />
<rect x="1516" y="304" width="33" height="1186" fill="#ececec" />
<rect x="651" y="674" width="835" height="34" fill="#aef89c" />
<rect x="651" y="738" width="835" height="34" fill="#aef89c" />
<rect x="651" y="898" width="835" height="34" fill="#aef89c" />
<rect x="651" y="962" width="835" height="34" fill="#aef89c" />
<rect x="651" y="1058" width="835" height="34" fill="#aef89c" />
<rect x="651" y="834" width="835" height="34" fill="#a4eca0" />
<clipPath id="cL"><rect x="651" y="304" width="835" height="1186"/></clipPath>
<g clip-path="url(#cL)">
<text transform="translate(765.7,314) scale(1,1.135)" x="0" y="0" font-family="'Liberation Mono'" font-size="23.28" xml:space="preserve"><tspan fill="#000000" stroke="#000000" stroke-width="0.35">000106b6</tspan></text>
<text transform="translate(891.5,314) scale(1,1.135)" x="0" y="0" font-family="'Liberation Mono'" font-size="23.28" xml:space="preserve"><tspan fill="#0a14e0" stroke="#0a14e0" stroke-width="0.35">c0 ef 50 00</tspan></text>
<text transform="translate(1112.5,314) scale(1,1.135)" x="0" y="0" font-family="'Liberation Mono'" font-size="23.28" xml:space="preserve"><tspan fill="#0a0a78" stroke="#0a0a78" stroke-width="0.35">vmov.i32</tspan></text>
<text transform="translate(1273.0,314) scale(1,1.135)" x="0" y="0" font-family="'Liberation Mono'" font-size="23.28" xml:space="preserve"><tspan fill="#7e7e2a" stroke="#7e7e2a" stroke-width="0.35">q8</tspan><tspan fill="#000000" stroke="#000000" stroke-width="0.35">,#</tspan><tspan fill="#000000" stroke="#000000" stroke-width="0.35">0</tspan></text>
<text transform="translate(765.7,346) scale(1,1.135)" x="0" y="0" font-family="'Liberation Mono'" font-size="23.28" xml:space="preserve"><tspan fill="#000000" stroke="#000000" stroke-width="0.35">000106ba</tspan></text>
<text transform="translate(891.5,346) scale(1,1.135)" x="0" y="0" font-family="'Liberation Mono'" font-size="23.28" xml:space="preserve"><tspan fill="#0a14e0" stroke="#0a14e0" stroke-width="0.35">43 f9 0f 0a</tspan></text>
<text transform="translate(1112.5,346) scale(1,1.135)" x="0" y="0" font-family="'Liberation Mono'" font-size="23.28" xml:space="preserve"><tspan fill="#0a0a78" stroke="#0a0a78" stroke-width="0.35">vst1.8</tspan></text>
<text transform="translate(1273.0,346) scale(1,1.135)" x="0" y="0" font-family="'Liberation Mono'" font-size="23.28" xml:space="preserve"><tspan fill="#000000" stroke="#000000" stroke-width="0.35">{</tspan><tspan fill="#7e7e2a" stroke="#7e7e2a" stroke-width="0.35">d16</tspan><tspan fill="#000000" stroke="#000000" stroke-width="0.35">,</tspan><tspan fill="#7e7e2a" stroke="#7e7e2a" stroke-width="0.35">d17</tspan><tspan fill="#000000" stroke="#000000" stroke-width="0.35">},[</tspan><tspan fill="#7e7e2a" stroke="#7e7e2a" stroke-width="0.35">r3</tspan><tspan fill="#000000" stroke="#000000" stroke-width="0.35">]</tspan></text>
<text transform="translate(765.7,378) scale(1,1.135)" x="0" y="0" font-family="'Liberation Mono'" font-size="23.28" xml:space="preserve"><tspan fill="#000000" stroke="#000000" stroke-width="0.35">000106be</tspan></text>
<text transform="translate(891.5,378) scale(1,1.135)" x="0" y="0" font-family="'Liberation Mono'" font-size="23.28" xml:space="preserve"><tspan fill="#0a14e0" stroke="#0a14e0" stroke-width="0.35">03 f1 0c 03</tspan></text>
<text transform="translate(1112.5,378) scale(1,1.135)" x="0" y="0" font-family="'Liberation Mono'" font-size="23.28" xml:space="preserve"><tspan fill="#0a0a78" stroke="#0a0a78" stroke-width="0.35">add.w</tspan></text>
<text transform="translate(1273.0,378) scale(1,1.135)" x="0" y="0" font-family="'Liberation Mono'" font-size="23.28" xml:space="preserve"><tspan fill="#7e7e2a" stroke="#7e7e2a" stroke-width="0.35">r3</tspan><tspan fill="#000000" stroke="#000000" stroke-width="0.35">,</tspan><tspan fill="#7e7e2a" stroke="#7e7e2a" stroke-width="0.35">r3</tspan><tspan fill="#000000" stroke="#000000" stroke-width="0.35">,#</tspan><tspan fill="#2a7a2a" stroke="#2a7a2a" stroke-width="0.35">0xc</tspan></text>
<text transform="translate(765.7,410) scale(1,1.135)" x="0" y="0" font-family="'Liberation Mono'" font-size="23.28" xml:space="preserve"><tspan fill="#000000" stroke="#000000" stroke-width="0.35">000106c2</tspan></text>
<text transform="translate(891.5,410) scale(1,1.135)" x="0" y="0" font-family="'Liberation Mono'" font-size="23.28" xml:space="preserve"><tspan fill="#0a14e0" stroke="#0a14e0" stroke-width="0.35">43 f9 0f 0a</tspan></text>
<text transform="translate(1112.5,410) scale(1,1.135)" x="0" y="0" font-family="'Liberation Mono'" font-size="23.28" xml:space="preserve"><tspan fill="#0a0a78" stroke="#0a0a78" stroke-width="0.35">vst1.8</tspan></text>
<text transform="translate(1273.0,410) scale(1,1.135)" x="0" y="0" font-family="'Liberation Mono'" font-size="23.28" xml:space="preserve"><tspan fill="#000000" stroke="#000000" stroke-width="0.35">{</tspan><tspan fill="#7e7e2a" stroke="#7e7e2a" stroke-width="0.35">d16</tspan><tspan fill="#000000" stroke="#000000" stroke-width="0.35">,</tspan><tspan fill="#7e7e2a" stroke="#7e7e2a" stroke-width="0.35">d17</tspan><tspan fill="#000000" stroke="#000000" stroke-width="0.35">},[</tspan><tspan fill="#7e7e2a" stroke="#7e7e2a" stroke-width="0.35">r3</tspan><tspan fill="#000000" stroke="#000000" stroke-width="0.35">]</tspan></text>
<text transform="translate(765.7,442) scale(1,1.135)" x="0" y="0" font-family="'Liberation Mono'" font-size="23.28" xml:space="preserve"><tspan fill="#000000" stroke="#000000" stroke-width="0.35">000106c6</tspan></text>
<text transform="translate(891.5,442) scale(1,1.135)" x="0" y="0" font-family="'Liberation Mono'" font-size="23.28" xml:space="preserve"><tspan fill="#0a14e0" stroke="#0a14e0" stroke-width="0.35">4f f0 00 03</tspan></text>
<text transform="translate(1112.5,442) scale(1,1.135)" x="0" y="0" font-family="'Liberation Mono'" font-size="23.28" xml:space="preserve"><tspan fill="#0a0a78" stroke="#0a0a78" stroke-width="0.35">mov.w</tspan></text>
<text transform="translate(1273.0,442) scale(1,1.135)" x="0" y="0" font-family="'Liberation Mono'" font-size="23.28" xml:space="preserve"><tspan fill="#7e7e2a" stroke="#7e7e2a" stroke-width="0.35">r3</tspan><tspan fill="#000000" stroke="#000000" stroke-width="0.35">,#</tspan><tspan fill="#2a7a2a" stroke="#2a7a2a" stroke-width="0.35">0x0</tspan></text>
<text transform="translate(765.7,474) scale(1,1.135)" x="0" y="0" font-family="'Liberation Mono'" font-size="23.28" xml:space="preserve"><tspan fill="#000000" stroke="#000000" stroke-width="0.35">000106ca</tspan></text>
<text transform="translate(891.5,474) scale(1,1.135)" x="0" y="0" font-family="'Liberation Mono'" font-size="23.28" xml:space="preserve"><tspan fill="#0a14e0" stroke="#0a14e0" stroke-width="0.35">fb 60</tspan></text>
<text transform="translate(1112.5,474) scale(1,1.135)" x="0" y="0" font-family="'Liberation Mono'" font-size="23.28" xml:space="preserve"><tspan fill="#0a0a78" stroke="#0a0a78" stroke-width="0.35">str</tspan></text>
<text transform="translate(1273.0,474) scale(1,1.135)" x="0" y="0" font-family="'Liberation Mono'" font-size="23.28" xml:space="preserve"><tspan fill="#7e7e2a" stroke="#7e7e2a" stroke-width="0.35">r3</tspan><tspan fill="#000000" stroke="#000000" stroke-width="0.35">,[</tspan><tspan fill="#7e7e2a" stroke="#7e7e2a" stroke-width="0.35">r7</tspan><tspan fill="#000000" stroke="#000000" stroke-width="0.35">,#</tspan><tspan fill="#2a7a2a" stroke="#2a7a2a" stroke-width="0.35">0xc</tspan><tspan fill="#000000" stroke="#000000" stroke-width="0.35">]</tspan></text>
<text transform="translate(765.7,506) scale(1,1.135)" x="0" y="0" font-family="'Liberation Mono'" font-size="23.28" xml:space="preserve"><tspan fill="#000000" stroke="#000000" stroke-width="0.35">000106cc</tspan></text>
<text transform="translate(891.5,506) scale(1,1.135)" x="0" y="0" font-family="'Liberation Mono'" font-size="23.28" xml:space="preserve"><tspan fill="#0a14e0" stroke="#0a14e0" stroke-width="0.35">07 f1 10 03</tspan></text>
<text transform="translate(1112.5,506) scale(1,1.135)" x="0" y="0" font-family="'Liberation Mono'" font-size="23.28" xml:space="preserve"><tspan fill="#0a0a78" stroke="#0a0a78" stroke-width="0.35">add.w</tspan></text>
<text transform="translate(1273.0,506) scale(1,1.135)" x="0" y="0" font-family="'Liberation Mono'" font-size="23.28" xml:space="preserve"><tspan fill="#7e7e2a" stroke="#7e7e2a" stroke-width="0.35">r3</tspan><tspan fill="#000000" stroke="#000000" stroke-width="0.35">,</tspan><tspan fill="#7e7e2a" stroke="#7e7e2a" stroke-width="0.35">r7</tspan><tspan fill="#000000" stroke="#000000" stroke-width="0.35">,#</tspan><tspan fill="#2a7a2a" stroke="#2a7a2a" stroke-width="0.35">0x10</tspan></text>
<text transform="translate(765.7,538) scale(1,1.135)" x="0" y="0" font-family="'Liberation Mono'" font-size="23.28" xml:space="preserve"><tspan fill="#000000" stroke="#000000" stroke-width="0.35">000106d0</tspan></text>
<text transform="translate(891.5,538) scale(1,1.135)" x="0" y="0" font-family="'Liberation Mono'" font-size="23.28" xml:space="preserve"><tspan fill="#0a14e0" stroke="#0a14e0" stroke-width="0.35">c0 ef 50 00</tspan></text>
<text transform="translate(1112.5,538) scale(1,1.135)" x="0" y="0" font-family="'Liberation Mono'" font-size="23.28" xml:space="preserve"><tspan fill="#0a0a78" stroke="#0a0a78" stroke-width="0.35">vmov.i32</tspan></text>
<text transform="translate(1273.0,538) scale(1,1.135)" x="0" y="0" font-family="'Liberation Mono'" font-size="23.28" xml:space="preserve"><tspan fill="#7e7e2a" stroke="#7e7e2a" stroke-width="0.35">q8</tspan><tspan fill="#000000" stroke="#000000" stroke-width="0.35">,#0</tspan></text>
<text transform="translate(765.7,570) scale(1,1.135)" x="0" y="0" font-family="'Liberation Mono'" font-size="23.28" xml:space="preserve"><tspan fill="#000000" stroke="#000000" stroke-width="0.35">000106d4</tspan></text>
<text transform="translate(891.5,570) scale(1,1.135)" x="0" y="0" font-family="'Liberation Mono'" font-size="23.28" xml:space="preserve"><tspan fill="#0a14e0" stroke="#0a14e0" stroke-width="0.35">43 f9 0f 0a</tspan></text>
<text transform="translate(1112.5,570) scale(1,1.135)" x="0" y="0" font-family="'Liberation Mono'" font-size="23.28" xml:space="preserve"><tspan fill="#0a0a78" stroke="#0a0a78" stroke-width="0.35">vst1.8</tspan></text>
<text transform="translate(1273.0,570) scale(1,1.135)" x="0" y="0" font-family="'Liberation Mono'" font-size="23.28" xml:space="preserve"><tspan fill="#000000" stroke="#000000" stroke-width="0.35">{</tspan><tspan fill="#7e7e2a" stroke="#7e7e2a" stroke-width="0.35">d16</tspan><tspan fill="#000000" stroke="#000000" stroke-width="0.35">,</tspan><tspan fill="#7e7e2a" stroke="#7e7e2a" stroke-width="0.35">d17</tspan><tspan fill="#000000" stroke="#000000" stroke-width="0.35">},[</tspan><tspan fill="#7e7e2a" stroke="#7e7e2a" stroke-width="0.35">r3</tspan><tspan fill="#000000" stroke="#000000" stroke-width="0.35">]</tspan></text>
<text transform="translate(765.7,602) scale(1,1.135)" x="0" y="0" font-family="'Liberation Mono'" font-size="23.28" xml:space="preserve"><tspan fill="#000000" stroke="#000000" stroke-width="0.35">000106d8</tspan></text>
<text transform="translate(891.5,602) scale(1,1.135)" x="0" y="0" font-family="'Liberation Mono'" font-size="23.28" xml:space="preserve"><tspan fill="#0a14e0" stroke="#0a14e0" stroke-width="0.35">03 f1 0c 03</tspan></text>
<text transform="translate(1112.5,602) scale(1,1.135)" x="0" y="0" font-family="'Liberation Mono'" font-size="23.28" xml:space="preserve"><tspan fill="#0a0a78" stroke="#0a0a78" stroke-width="0.35">add.w</tspan></text>
<text transform="translate(1273.0,602) scale(1,1.135)" x="0" y="0" font-family="'Liberation Mono'" font-size="23.28" xml:space="preserve"><tspan fill="#7e7e2a" stroke="#7e7e2a" stroke-width="0.35">r3</tspan><tspan fill="#000000" stroke="#000000" stroke-width="0.35">,</tspan><tspan fill="#7e7e2a" stroke="#7e7e2a" stroke-width="0.35">r3</tspan><tspan fill="#000000" stroke="#000000" stroke-width="0.35">,#</tspan><tspan fill="#2a7a2a" stroke="#2a7a2a" stroke-width="0.35">0xc</tspan></text>
<text transform="translate(765.7,634) scale(1,1.135)" x="0" y="0" font-family="'Liberation Mono'" font-size="23.28" xml:space="preserve"><tspan fill="#000000" stroke="#000000" stroke-width="0.35">000106dc</tspan></text>
<text transform="translate(891.5,634) scale(1,1.135)" x="0" y="0" font-family="'Liberation Mono'" font-size="23.28" xml:space="preserve"><tspan fill="#0a14e0" stroke="#0a14e0" stroke-width="0.35">43 f9 0f 0a</tspan></text>
<text transform="translate(1112.5,634) scale(1,1.135)" x="0" y="0" font-family="'Liberation Mono'" font-size="23.28" xml:space="preserve"><tspan fill="#0a0a78" stroke="#0a0a78" stroke-width="0.35">vst1.8</tspan></text>
<text transform="translate(1273.0,634) scale(1,1.135)" x="0" y="0" font-family="'Liberation Mono'" font-size="23.28" xml:space="preserve"><tspan fill="#000000" stroke="#000000" stroke-width="0.35">{</tspan><tspan fill="#7e7e2a" stroke="#7e7e2a" stroke-width="0.35">d16</tspan><tspan fill="#000000" stroke="#000000" stroke-width="0.35">,</tspan><tspan fill="#7e7e2a" stroke="#7e7e2a" stroke-width="0.35">d17</tspan><tspan fill="#000000" stroke="#000000" stroke-width="0.35">},[</tspan><tspan fill="#7e7e2a" stroke="#7e7e2a" stroke-width="0.35">r3</tspan><tspan fill="#000000" stroke="#000000" stroke-width="0.35">]</tspan></text>
<text transform="translate(765.7,666) scale(1,1.135)" x="0" y="0" font-family="'Liberation Mono'" font-size="23.28" xml:space="preserve"><tspan fill="#000000" stroke="#000000" stroke-width="0.35">000106e0</tspan></text>
<text transform="translate(891.5,666) scale(1,1.135)" x="0" y="0" font-family="'Liberation Mono'" font-size="23.28" xml:space="preserve"><tspan fill="#0a14e0" stroke="#0a14e0" stroke-width="0.35">3b 68</tspan></text>
<text transform="translate(1112.5,666) scale(1,1.135)" x="0" y="0" font-family="'Liberation Mono'" font-size="23.28" xml:space="preserve"><tspan fill="#0a0a78" stroke="#0a0a78" stroke-width="0.35">ldr</tspan></text>
<text transform="translate(1273.0,666) scale(1,1.135)" x="0" y="0" font-family="'Liberation Mono'" font-size="23.28" xml:space="preserve"><tspan fill="#7e7e2a" stroke="#7e7e2a" stroke-width="0.35">r3</tspan><tspan fill="#000000" stroke="#000000" stroke-width="0.35">,[</tspan><tspan fill="#7e7e2a" stroke="#7e7e2a" stroke-width="0.35">r7</tspan><tspan fill="#000000" stroke="#000000" stroke-width="0.35">,#</tspan><tspan fill="#2a7a2a" stroke="#2a7a2a" stroke-width="0.35">0x0</tspan><tspan fill="#000000" stroke="#000000" stroke-width="0.35">]</tspan></text>
<text transform="translate(765.7,698) scale(1,1.135)" x="0" y="0" font-family="'Liberation Mono'" font-size="23.28" xml:space="preserve"><tspan fill="#000000" stroke="#000000" stroke-width="0.35">000106e2</tspan></text>
<text transform="translate(891.5,698) scale(1,1.135)" x="0" y="0" font-family="'Liberation Mono'" font-size="23.28" xml:space="preserve"><tspan fill="#0a14e0" stroke="#0a14e0" stroke-width="0.35">03 f1 04 03</tspan></text>
<text transform="translate(1112.5,698) scale(1,1.135)" x="0" y="0" font-family="'Liberation Mono'" font-size="23.28" xml:space="preserve"><tspan fill="#0a0a78" stroke="#0a0a78" stroke-width="0.35">add.w</tspan></text>
<text transform="translate(1273.0,698) scale(1,1.135)" x="0" y="0" font-family="'Liberation Mono'" font-size="23.28" xml:space="preserve"><tspan fill="#7e7e2a" stroke="#7e7e2a" stroke-width="0.35">r3</tspan><tspan fill="#000000" stroke="#000000" stroke-width="0.35">,</tspan><tspan fill="#7e7e2a" stroke="#7e7e2a" stroke-width="0.35">r3</tspan><tspan fill="#000000" stroke="#000000" stroke-width="0.35">,#</tspan><tspan fill="#2a7a2a" stroke="#2a7a2a" stroke-width="0.35">0x4</tspan></text>
<text transform="translate(765.7,730) scale(1,1.135)" x="0" y="0" font-family="'Liberation Mono'" font-size="23.28" xml:space="preserve"><tspan fill="#000000" stroke="#000000" stroke-width="0.35">000106e6</tspan></text>
<text transform="translate(891.5,730) scale(1,1.135)" x="0" y="0" font-family="'Liberation Mono'" font-size="23.28" xml:space="preserve"><tspan fill="#0a14e0" stroke="#0a14e0" stroke-width="0.35">1a 68</tspan></text>
<text transform="translate(1112.5,730) scale(1,1.135)" x="0" y="0" font-family="'Liberation Mono'" font-size="23.28" xml:space="preserve"><tspan fill="#0a0a78" stroke="#0a0a78" stroke-width="0.35">ldr</tspan></text>
<text transform="translate(1273.0,730) scale(1,1.135)" x="0" y="0" font-family="'Liberation Mono'" font-size="23.28" xml:space="preserve"><tspan fill="#7e7e2a" stroke="#7e7e2a" stroke-width="0.35">r2</tspan><tspan fill="#000000" stroke="#000000" stroke-width="0.35">,[</tspan><tspan fill="#7e7e2a" stroke="#7e7e2a" stroke-width="0.35">r3</tspan><tspan fill="#000000" stroke="#000000" stroke-width="0.35">,#</tspan><tspan fill="#2a7a2a" stroke="#2a7a2a" stroke-width="0.35">0x0</tspan><tspan fill="#000000" stroke="#000000" stroke-width="0.35">]</tspan></text>
<text transform="translate(765.7,762) scale(1,1.135)" x="0" y="0" font-family="'Liberation Mono'" font-size="23.28" xml:space="preserve"><tspan fill="#000000" stroke="#000000" stroke-width="0.35">000106e8</tspan></text>
<text transform="translate(891.5,762) scale(1,1.135)" x="0" y="0" font-family="'Liberation Mono'" font-size="23.28" xml:space="preserve"><tspan fill="#0a14e0" stroke="#0a14e0" stroke-width="0.35">07 f1 2c 03</tspan></text>
<text transform="translate(1112.5,762) scale(1,1.135)" x="0" y="0" font-family="'Liberation Mono'" font-size="23.28" xml:space="preserve"><tspan fill="#0a0a78" stroke="#0a0a78" stroke-width="0.35">add.w</tspan></text>
<text transform="translate(1273.0,762) scale(1,1.135)" x="0" y="0" font-family="'Liberation Mono'" font-size="23.28" xml:space="preserve"><tspan fill="#7e7e2a" stroke="#7e7e2a" stroke-width="0.35">r3</tspan><tspan fill="#000000" stroke="#000000" stroke-width="0.35">,</tspan><tspan fill="#7e7e2a" stroke="#7e7e2a" stroke-width="0.35">r7</tspan><tspan fill="#000000" stroke="#000000" stroke-width="0.35">,#</tspan><tspan fill="#2a7a2a" stroke="#2a7a2a" stroke-width="0.35">0x2c</tspan></text>
<text transform="translate(765.7,794) scale(1,1.135)" x="0" y="0" font-family="'Liberation Mono'" font-size="23.28" xml:space="preserve"><tspan fill="#000000" stroke="#000000" stroke-width="0.35">000106ec</tspan></text>
<text transform="translate(891.5,794) scale(1,1.135)" x="0" y="0" font-family="'Liberation Mono'" font-size="23.28" xml:space="preserve"><tspan fill="#0a14e0" stroke="#0a14e0" stroke-width="0.35">11 46</tspan></text>
<text transform="translate(1112.5,794) scale(1,1.135)" x="0" y="0" font-family="'Liberation Mono'" font-size="23.28" xml:space="preserve"><tspan fill="#0a0a78" stroke="#0a0a78" stroke-width="0.35">mov</tspan></text>
<text transform="translate(1273.0,794) scale(1,1.135)" x="0" y="0" font-family="'Liberation Mono'" font-size="23.28" xml:space="preserve"><tspan fill="#7e7e2a" stroke="#7e7e2a" stroke-width="0.35">r1</tspan><tspan fill="#000000" stroke="#000000" stroke-width="0.35">,</tspan><tspan fill="#7e7e2a" stroke="#7e7e2a" stroke-width="0.35">r2</tspan></text>
<text transform="translate(765.7,826) scale(1,1.135)" x="0" y="0" font-family="'Liberation Mono'" font-size="23.28" xml:space="preserve"><tspan fill="#000000" stroke="#000000" stroke-width="0.35">000106ee</tspan></text>
<text transform="translate(891.5,826) scale(1,1.135)" x="0" y="0" font-family="'Liberation Mono'" font-size="23.28" xml:space="preserve"><tspan fill="#0a14e0" stroke="#0a14e0" stroke-width="0.35">18 46</tspan></text>
<text transform="translate(1112.5,826) scale(1,1.135)" x="0" y="0" font-family="'Liberation Mono'" font-size="23.28" xml:space="preserve"><tspan fill="#0a0a78" stroke="#0a0a78" stroke-width="0.35">mov</tspan></text>
<text transform="translate(1273.0,826) scale(1,1.135)" x="0" y="0" font-family="'Liberation Mono'" font-size="23.28" xml:space="preserve"><tspan fill="#7e7e2a" stroke="#7e7e2a" stroke-width="0.35">r0</tspan><tspan fill="#000000" stroke="#000000" stroke-width="0.35">,</tspan><tspan fill="#7e7e2a" stroke="#7e7e2a" stroke-width="0.35">r3</tspan></text>
<text transform="translate(765.7,858) scale(1,1.135)" x="0" y="0" font-family="'Liberation Mono'" font-size="23.28" xml:space="preserve"><tspan fill="#000000" stroke="#000000" stroke-width="0.35">000106f0</tspan></text>
<text transform="translate(891.5,858) scale(1,1.135)" x="0" y="0" font-family="'Liberation Mono'" font-size="23.28" xml:space="preserve"><tspan fill="#0a14e0" stroke="#0a14e0" stroke-width="0.35">ff f7 36 ef</tspan></text>
<text transform="translate(1112.5,858) scale(1,1.135)" x="0" y="0" font-family="'Liberation Mono'" font-size="23.28" xml:space="preserve"><tspan fill="#0a0a78" stroke="#0a0a78" stroke-width="0.35">blx</tspan></text>
<text transform="translate(1273.0,858) scale(1,1.135)" x="0" y="0" font-family="'Liberation Mono'" font-size="23.28" xml:space="preserve"><tspan fill="#0a14e0" stroke="#0a14e0" stroke-width="0.35">&lt;EXTERNAL&gt;::strcpy</tspan></text>
<text transform="translate(765.7,890) scale(1,1.135)" x="0" y="0" font-family="'Liberation Mono'" font-size="23.28" xml:space="preserve"><tspan fill="#000000" stroke="#000000" stroke-width="0.35">000106f4</tspan></text>
<text transform="translate(891.5,890) scale(1,1.135)" x="0" y="0" font-family="'Liberation Mono'" font-size="23.28" xml:space="preserve"><tspan fill="#0a14e0" stroke="#0a14e0" stroke-width="0.35">3b 68</tspan></text>
<text transform="translate(1112.5,890) scale(1,1.135)" x="0" y="0" font-family="'Liberation Mono'" font-size="23.28" xml:space="preserve"><tspan fill="#0a0a78" stroke="#0a0a78" stroke-width="0.35">ldr</tspan></text>
<text transform="translate(1273.0,890) scale(1,1.135)" x="0" y="0" font-family="'Liberation Mono'" font-size="23.28" xml:space="preserve"><tspan fill="#7e7e2a" stroke="#7e7e2a" stroke-width="0.35">r3</tspan><tspan fill="#000000" stroke="#000000" stroke-width="0.35">,[</tspan><tspan fill="#7e7e2a" stroke="#7e7e2a" stroke-width="0.35">r7</tspan><tspan fill="#000000" stroke="#000000" stroke-width="0.35">,#</tspan><tspan fill="#2a7a2a" stroke="#2a7a2a" stroke-width="0.35">0x0</tspan><tspan fill="#000000" stroke="#000000" stroke-width="0.35">]</tspan></text>
<text transform="translate(765.7,922) scale(1,1.135)" x="0" y="0" font-family="'Liberation Mono'" font-size="23.28" xml:space="preserve"><tspan fill="#000000" stroke="#000000" stroke-width="0.35">000106f6</tspan></text>
<text transform="translate(891.5,922) scale(1,1.135)" x="0" y="0" font-family="'Liberation Mono'" font-size="23.28" xml:space="preserve"><tspan fill="#0a14e0" stroke="#0a14e0" stroke-width="0.35">03 f1 08 03</tspan></text>
<text transform="translate(1112.5,922) scale(1,1.135)" x="0" y="0" font-family="'Liberation Mono'" font-size="23.28" xml:space="preserve"><tspan fill="#0a0a78" stroke="#0a0a78" stroke-width="0.35">add.w</tspan></text>
<text transform="translate(1273.0,922) scale(1,1.135)" x="0" y="0" font-family="'Liberation Mono'" font-size="23.28" xml:space="preserve"><tspan fill="#7e7e2a" stroke="#7e7e2a" stroke-width="0.35">r3</tspan><tspan fill="#000000" stroke="#000000" stroke-width="0.35">,</tspan><tspan fill="#7e7e2a" stroke="#7e7e2a" stroke-width="0.35">r3</tspan><tspan fill="#000000" stroke="#000000" stroke-width="0.35">,#</tspan><tspan fill="#2a7a2a" stroke="#2a7a2a" stroke-width="0.35">0x8</tspan></text>
<text transform="translate(765.7,954) scale(1,1.135)" x="0" y="0" font-family="'Liberation Mono'" font-size="23.28" xml:space="preserve"><tspan fill="#000000" stroke="#000000" stroke-width="0.35">000106fa</tspan></text>
<text transform="translate(891.5,954) scale(1,1.135)" x="0" y="0" font-family="'Liberation Mono'" font-size="23.28" xml:space="preserve"><tspan fill="#0a14e0" stroke="#0a14e0" stroke-width="0.35">1a 68</tspan></text>
<text transform="translate(1112.5,954) scale(1,1.135)" x="0" y="0" font-family="'Liberation Mono'" font-size="23.28" xml:space="preserve"><tspan fill="#0a0a78" stroke="#0a0a78" stroke-width="0.35">ldr</tspan></text>
<text transform="translate(1273.0,954) scale(1,1.135)" x="0" y="0" font-family="'Liberation Mono'" font-size="23.28" xml:space="preserve"><tspan fill="#7e7e2a" stroke="#7e7e2a" stroke-width="0.35">r2</tspan><tspan fill="#000000" stroke="#000000" stroke-width="0.35">,[</tspan><tspan fill="#7e7e2a" stroke="#7e7e2a" stroke-width="0.35">r3</tspan><tspan fill="#000000" stroke="#000000" stroke-width="0.35">,#</tspan><tspan fill="#2a7a2a" stroke="#2a7a2a" stroke-width="0.35">0x0</tspan><tspan fill="#000000" stroke="#000000" stroke-width="0.35">]</tspan></text>
<text transform="translate(765.7,986) scale(1,1.135)" x="0" y="0" font-family="'Liberation Mono'" font-size="23.28" xml:space="preserve"><tspan fill="#000000" stroke="#000000" stroke-width="0.35">000106fc</tspan></text>
<text transform="translate(891.5,986) scale(1,1.135)" x="0" y="0" font-family="'Liberation Mono'" font-size="23.28" xml:space="preserve"><tspan fill="#0a14e0" stroke="#0a14e0" stroke-width="0.35">07 f1 0c 03</tspan></text>
<text transform="translate(1112.5,986) scale(1,1.135)" x="0" y="0" font-family="'Liberation Mono'" font-size="23.28" xml:space="preserve"><tspan fill="#0a0a78" stroke="#0a0a78" stroke-width="0.35">add.w</tspan></text>
<text transform="translate(1273.0,986) scale(1,1.135)" x="0" y="0" font-family="'Liberation Mono'" font-size="23.28" xml:space="preserve"><tspan fill="#7e7e2a" stroke="#7e7e2a" stroke-width="0.35">r3</tspan><tspan fill="#000000" stroke="#000000" stroke-width="0.35">,</tspan><tspan fill="#7e7e2a" stroke="#7e7e2a" stroke-width="0.35">r7</tspan><tspan fill="#000000" stroke="#000000" stroke-width="0.35">,#</tspan><tspan fill="#2a7a2a" stroke="#2a7a2a" stroke-width="0.35">0xc</tspan></text>
<text transform="translate(765.7,1018) scale(1,1.135)" x="0" y="0" font-family="'Liberation Mono'" font-size="23.28" xml:space="preserve"><tspan fill="#000000" stroke="#000000" stroke-width="0.35">00010700</tspan></text>
<text transform="translate(891.5,1018) scale(1,1.135)" x="0" y="0" font-family="'Liberation Mono'" font-size="23.28" xml:space="preserve"><tspan fill="#0a14e0" stroke="#0a14e0" stroke-width="0.35">11 46</tspan></text>
<text transform="translate(1112.5,1018) scale(1,1.135)" x="0" y="0" font-family="'Liberation Mono'" font-size="23.28" xml:space="preserve"><tspan fill="#0a0a78" stroke="#0a0a78" stroke-width="0.35">mov</tspan></text>
<text transform="translate(1273.0,1018) scale(1,1.135)" x="0" y="0" font-family="'Liberation Mono'" font-size="23.28" xml:space="preserve"><tspan fill="#7e7e2a" stroke="#7e7e2a" stroke-width="0.35">r1</tspan><tspan fill="#000000" stroke="#000000" stroke-width="0.35">,</tspan><tspan fill="#7e7e2a" stroke="#7e7e2a" stroke-width="0.35">r2</tspan></text>
<text transform="translate(765.7,1050) scale(1,1.135)" x="0" y="0" font-family="'Liberation Mono'" font-size="23.28" xml:space="preserve"><tspan fill="#000000" stroke="#000000" stroke-width="0.35">00010702</tspan></text>
<text transform="translate(891.5,1050) scale(1,1.135)" x="0" y="0" font-family="'Liberation Mono'" font-size="23.28" xml:space="preserve"><tspan fill="#0a14e0" stroke="#0a14e0" stroke-width="0.35">18 46</tspan></text>
<text transform="translate(1112.5,1050) scale(1,1.135)" x="0" y="0" font-family="'Liberation Mono'" font-size="23.28" xml:space="preserve"><tspan fill="#0a0a78" stroke="#0a0a78" stroke-width="0.35">mov</tspan></text>
<text transform="translate(1273.0,1050) scale(1,1.135)" x="0" y="0" font-family="'Liberation Mono'" font-size="23.28" xml:space="preserve"><tspan fill="#7e7e2a" stroke="#7e7e2a" stroke-width="0.35">r0</tspan><tspan fill="#000000" stroke="#000000" stroke-width="0.35">,</tspan><tspan fill="#7e7e2a" stroke="#7e7e2a" stroke-width="0.35">r3</tspan></text>
<text transform="translate(765.7,1082) scale(1,1.135)" x="0" y="0" font-family="'Liberation Mono'" font-size="23.28" xml:space="preserve"><tspan fill="#000000" stroke="#000000" stroke-width="0.35">00010704</tspan></text>
<text transform="translate(891.5,1082) scale(1,1.135)" x="0" y="0" font-family="'Liberation Mono'" font-size="23.28" xml:space="preserve"><tspan fill="#0a14e0" stroke="#0a14e0" stroke-width="0.35">ff f7 2c ef</tspan></text>
<text transform="translate(1112.5,1082) scale(1,1.135)" x="0" y="0" font-family="'Liberation Mono'" font-size="23.28" xml:space="preserve"><tspan fill="#0a0a78" stroke="#0a0a78" stroke-width="0.35">blx</tspan></text>
<text transform="translate(1273.0,1082) scale(1,1.135)" x="0" y="0" font-family="'Liberation Mono'" font-size="23.28" xml:space="preserve"><tspan fill="#0a14e0" stroke="#0a14e0" stroke-width="0.35">&lt;EXTERNAL&gt;::strcpy</tspan></text>
<text transform="translate(765.7,1114) scale(1,1.135)" x="0" y="0" font-family="'Liberation Mono'" font-size="23.28" xml:space="preserve"><tspan fill="#000000" stroke="#000000" stroke-width="0.35">00010708</tspan></text>
<text transform="translate(891.5,1114) scale(1,1.135)" x="0" y="0" font-family="'Liberation Mono'" font-size="23.28" xml:space="preserve"><tspan fill="#0a14e0" stroke="#0a14e0" stroke-width="0.35">4f f0 00 03</tspan></text>
<text transform="translate(1112.5,1114) scale(1,1.135)" x="0" y="0" font-family="'Liberation Mono'" font-size="23.28" xml:space="preserve"><tspan fill="#0a0a78" stroke="#0a0a78" stroke-width="0.35">mov.w</tspan></text>
<text transform="translate(1273.0,1114) scale(1,1.135)" x="0" y="0" font-family="'Liberation Mono'" font-size="23.28" xml:space="preserve"><tspan fill="#7e7e2a" stroke="#7e7e2a" stroke-width="0.35">r3</tspan><tspan fill="#000000" stroke="#000000" stroke-width="0.35">,#</tspan><tspan fill="#2a7a2a" stroke="#2a7a2a" stroke-width="0.35">0x0</tspan></text>
<text transform="translate(765.7,1146) scale(1,1.135)" x="0" y="0" font-family="'Liberation Mono'" font-size="23.28" xml:space="preserve"><tspan fill="#000000" stroke="#000000" stroke-width="0.35">0001070c</tspan></text>
<text transform="translate(891.5,1146) scale(1,1.135)" x="0" y="0" font-family="'Liberation Mono'" font-size="23.28" xml:space="preserve"><tspan fill="#0a14e0" stroke="#0a14e0" stroke-width="0.35">3b 65</tspan></text>
<text transform="translate(1112.5,1146) scale(1,1.135)" x="0" y="0" font-family="'Liberation Mono'" font-size="23.28" xml:space="preserve"><tspan fill="#0a0a78" stroke="#0a0a78" stroke-width="0.35">str</tspan></text>
<text transform="translate(1273.0,1146) scale(1,1.135)" x="0" y="0" font-family="'Liberation Mono'" font-size="23.28" xml:space="preserve"><tspan fill="#7e7e2a" stroke="#7e7e2a" stroke-width="0.35">r3</tspan><tspan fill="#000000" stroke="#000000" stroke-width="0.35">,[</tspan><tspan fill="#7e7e2a" stroke="#7e7e2a" stroke-width="0.35">r7</tspan><tspan fill="#000000" stroke="#000000" stroke-width="0.35">,#</tspan><tspan fill="#2a7a2a" stroke="#2a7a2a" stroke-width="0.35">0x50</tspan><tspan fill="#000000" stroke="#000000" stroke-width="0.35">]</tspan></text>
<text transform="translate(765.7,1178) scale(1,1.135)" x="0" y="0" font-family="'Liberation Mono'" font-size="23.28" xml:space="preserve"><tspan fill="#000000" stroke="#000000" stroke-width="0.35">0001070e</tspan></text>
<text transform="translate(891.5,1178) scale(1,1.135)" x="0" y="0" font-family="'Liberation Mono'" font-size="23.28" xml:space="preserve"><tspan fill="#0a14e0" stroke="#0a14e0" stroke-width="0.35">4f f0 00 03</tspan></text>
<text transform="translate(1112.5,1178) scale(1,1.135)" x="0" y="0" font-family="'Liberation Mono'" font-size="23.28" xml:space="preserve"><tspan fill="#0a0a78" stroke="#0a0a78" stroke-width="0.35">mov.w</tspan></text>
<text transform="translate(1273.0,1178) scale(1,1.135)" x="0" y="0" font-family="'Liberation Mono'" font-size="23.28" xml:space="preserve"><tspan fill="#7e7e2a" stroke="#7e7e2a" stroke-width="0.35">r3</tspan><tspan fill="#000000" stroke="#000000" stroke-width="0.35">,#</tspan><tspan fill="#2a7a2a" stroke="#2a7a2a" stroke-width="0.35">0x0</tspan></text>
<text transform="translate(765.7,1210) scale(1,1.135)" x="0" y="0" font-family="'Liberation Mono'" font-size="23.28" xml:space="preserve"><tspan fill="#000000" stroke="#000000" stroke-width="0.35">00010712</tspan></text>
<text transform="translate(891.5,1210) scale(1,1.135)" x="0" y="0" font-family="'Liberation Mono'" font-size="23.28" xml:space="preserve"><tspan fill="#0a14e0" stroke="#0a14e0" stroke-width="0.35">fb 64</tspan></text>
<text transform="translate(1112.5,1210) scale(1,1.135)" x="0" y="0" font-family="'Liberation Mono'" font-size="23.28" xml:space="preserve"><tspan fill="#0a0a78" stroke="#0a0a78" stroke-width="0.35">str</tspan></text>
<text transform="translate(1273.0,1210) scale(1,1.135)" x="0" y="0" font-family="'Liberation Mono'" font-size="23.28" xml:space="preserve"><tspan fill="#7e7e2a" stroke="#7e7e2a" stroke-width="0.35">r3</tspan><tspan fill="#000000" stroke="#000000" stroke-width="0.35">,[</tspan><tspan fill="#7e7e2a" stroke="#7e7e2a" stroke-width="0.35">r7</tspan><tspan fill="#000000" stroke="#000000" stroke-width="0.35">,#</tspan><tspan fill="#2a7a2a" stroke="#2a7a2a" stroke-width="0.35">0x4c</tspan><tspan fill="#000000" stroke="#000000" stroke-width="0.35">]</tspan></text>
<text transform="translate(765.7,1242) scale(1,1.135)" x="0" y="0" font-family="'Liberation Mono'" font-size="23.28" xml:space="preserve"><tspan fill="#000000" stroke="#000000" stroke-width="0.35">00010714</tspan></text>
<text transform="translate(891.5,1242) scale(1,1.135)" x="0" y="0" font-family="'Liberation Mono'" font-size="23.28" xml:space="preserve"><tspan fill="#0a14e0" stroke="#0a14e0" stroke-width="0.35">22 4b</tspan></text>
<text transform="translate(1112.5,1242) scale(1,1.135)" x="0" y="0" font-family="'Liberation Mono'" font-size="23.28" xml:space="preserve"><tspan fill="#0a0a78" stroke="#0a0a78" stroke-width="0.35">ldr</tspan></text>
<text transform="translate(1273.0,1242) scale(1,1.135)" x="0" y="0" font-family="'Liberation Mono'" font-size="23.28" xml:space="preserve"><tspan fill="#7e7e2a" stroke="#7e7e2a" stroke-width="0.35">r3</tspan><tspan fill="#000000" stroke="#000000" stroke-width="0.35">,[</tspan><tspan fill="#0a14e0" stroke="#0a14e0" stroke-width="0.35">DAT_000107a0</tspan><tspan fill="#000000" stroke="#000000" stroke-width="0.35">]</tspan></text>
<text transform="translate(765.7,1274) scale(1,1.135)" x="0" y="0" font-family="'Liberation Mono'" font-size="23.28" xml:space="preserve"><tspan fill="#000000" stroke="#000000" stroke-width="0.35">00010716</tspan></text>
<text transform="translate(891.5,1274) scale(1,1.135)" x="0" y="0" font-family="'Liberation Mono'" font-size="23.28" xml:space="preserve"><tspan fill="#0a14e0" stroke="#0a14e0" stroke-width="0.35">7b 44</tspan></text>
<text transform="translate(1112.5,1274) scale(1,1.135)" x="0" y="0" font-family="'Liberation Mono'" font-size="23.28" xml:space="preserve"><tspan fill="#0a0a78" stroke="#0a0a78" stroke-width="0.35">add</tspan></text>
<text transform="translate(1273.0,1274) scale(1,1.135)" x="0" y="0" font-family="'Liberation Mono'" font-size="23.28" xml:space="preserve"><tspan fill="#7e7e2a" stroke="#7e7e2a" stroke-width="0.35">r3</tspan><tspan fill="#000000" stroke="#000000" stroke-width="0.35">,</tspan><tspan fill="#7e7e2a" stroke="#7e7e2a" stroke-width="0.35">pc</tspan></text>
<text transform="translate(765.7,1306) scale(1,1.135)" x="0" y="0" font-family="'Liberation Mono'" font-size="23.28" xml:space="preserve"><tspan fill="#000000" stroke="#000000" stroke-width="0.35">00010718</tspan></text>
<text transform="translate(891.5,1306) scale(1,1.135)" x="0" y="0" font-family="'Liberation Mono'" font-size="23.28" xml:space="preserve"><tspan fill="#0a14e0" stroke="#0a14e0" stroke-width="0.35">07 f1 0c 02</tspan></text>
<text transform="translate(1112.5,1306) scale(1,1.135)" x="0" y="0" font-family="'Liberation Mono'" font-size="23.28" xml:space="preserve"><tspan fill="#0a0a78" stroke="#0a0a78" stroke-width="0.35">add.w</tspan></text>
<text transform="translate(1273.0,1306) scale(1,1.135)" x="0" y="0" font-family="'Liberation Mono'" font-size="23.28" xml:space="preserve"><tspan fill="#7e7e2a" stroke="#7e7e2a" stroke-width="0.35">r2</tspan><tspan fill="#000000" stroke="#000000" stroke-width="0.35">,</tspan><tspan fill="#7e7e2a" stroke="#7e7e2a" stroke-width="0.35">r7</tspan><tspan fill="#000000" stroke="#000000" stroke-width="0.35">,#</tspan><tspan fill="#2a7a2a" stroke="#2a7a2a" stroke-width="0.35">0xc</tspan></text>
<text transform="translate(765.7,1338) scale(1,1.135)" x="0" y="0" font-family="'Liberation Mono'" font-size="23.28" xml:space="preserve"><tspan fill="#000000" stroke="#000000" stroke-width="0.35">0001071c</tspan></text>
<text transform="translate(891.5,1338) scale(1,1.135)" x="0" y="0" font-family="'Liberation Mono'" font-size="23.28" xml:space="preserve"><tspan fill="#0a14e0" stroke="#0a14e0" stroke-width="0.35">5a 60</tspan></text>
<text transform="translate(1112.5,1338) scale(1,1.135)" x="0" y="0" font-family="'Liberation Mono'" font-size="23.28" xml:space="preserve"><tspan fill="#0a0a78" stroke="#0a0a78" stroke-width="0.35">str</tspan></text>
<text transform="translate(1273.0,1338) scale(1,1.135)" x="0" y="0" font-family="'Liberation Mono'" font-size="23.28" xml:space="preserve"><tspan fill="#7e7e2a" stroke="#7e7e2a" stroke-width="0.35">r2</tspan><tspan fill="#000000" stroke="#000000" stroke-width="0.35">,[</tspan><tspan fill="#7e7e2a" stroke="#7e7e2a" stroke-width="0.35">r3</tspan><tspan fill="#000000" stroke="#000000" stroke-width="0.35">,#</tspan><tspan fill="#2a7a2a" stroke="#2a7a2a" stroke-width="0.35">0x4</tspan><tspan fill="#000000" stroke="#000000" stroke-width="0.35">]</tspan><tspan fill="#0a14e0" stroke="#0a14e0" stroke-width="0.35">=&gt;DAT_00021058</tspan></text>
<text transform="translate(765.7,1370) scale(1,1.135)" x="0" y="0" font-family="'Liberation Mono'" font-size="23.28" xml:space="preserve"><tspan fill="#000000" stroke="#000000" stroke-width="0.35">0001071e</tspan></text>
<text transform="translate(891.5,1370) scale(1,1.135)" x="0" y="0" font-family="'Liberation Mono'" font-size="23.28" xml:space="preserve"><tspan fill="#0a14e0" stroke="#0a14e0" stroke-width="0.35">07 f1 2c 01</tspan></text>
<text transform="translate(1112.5,1370) scale(1,1.135)" x="0" y="0" font-family="'Liberation Mono'" font-size="23.28" xml:space="preserve"><tspan fill="#0a0a78" stroke="#0a0a78" stroke-width="0.35">add.w</tspan></text>
<text transform="translate(1273.0,1370) scale(1,1.135)" x="0" y="0" font-family="'Liberation Mono'" font-size="23.28" xml:space="preserve"><tspan fill="#7e7e2a" stroke="#7e7e2a" stroke-width="0.35">r1</tspan><tspan fill="#000000" stroke="#000000" stroke-width="0.35">,</tspan><tspan fill="#7e7e2a" stroke="#7e7e2a" stroke-width="0.35">r7</tspan><tspan fill="#000000" stroke="#000000" stroke-width="0.35">,#</tspan><tspan fill="#2a7a2a" stroke="#2a7a2a" stroke-width="0.35">0x2c</tspan></text>
<text transform="translate(765.7,1402) scale(1,1.135)" x="0" y="0" font-family="'Liberation Mono'" font-size="23.28" xml:space="preserve"><tspan fill="#000000" stroke="#000000" stroke-width="0.35">00010722</tspan></text>
<text transform="translate(891.5,1402) scale(1,1.135)" x="0" y="0" font-family="'Liberation Mono'" font-size="23.28" xml:space="preserve"><tspan fill="#0a14e0" stroke="#0a14e0" stroke-width="0.35">20 4b</tspan></text>
<text transform="translate(1112.5,1402) scale(1,1.135)" x="0" y="0" font-family="'Liberation Mono'" font-size="23.28" xml:space="preserve"><tspan fill="#0a0a78" stroke="#0a0a78" stroke-width="0.35">ldr</tspan></text>
<text transform="translate(1273.0,1402) scale(1,1.135)" x="0" y="0" font-family="'Liberation Mono'" font-size="23.28" xml:space="preserve"><tspan fill="#7e7e2a" stroke="#7e7e2a" stroke-width="0.35">r3</tspan><tspan fill="#000000" stroke="#000000" stroke-width="0.35">,[</tspan><tspan fill="#0a14e0" stroke="#0a14e0" stroke-width="0.35">DAT_000107a4</tspan><tspan fill="#000000" stroke="#000000" stroke-width="0.35">]</tspan></text>
<text transform="translate(765.7,1434) scale(1,1.135)" x="0" y="0" font-family="'Liberation Mono'" font-size="23.28" xml:space="preserve"><tspan fill="#000000" stroke="#000000" stroke-width="0.35">00010724</tspan></text>
<text transform="translate(891.5,1434) scale(1,1.135)" x="0" y="0" font-family="'Liberation Mono'" font-size="23.28" xml:space="preserve"><tspan fill="#0a14e0" stroke="#0a14e0" stroke-width="0.35">7b 44</tspan></text>
<text transform="translate(1112.5,1434) scale(1,1.135)" x="0" y="0" font-family="'Liberation Mono'" font-size="23.28" xml:space="preserve"><tspan fill="#0a0a78" stroke="#0a0a78" stroke-width="0.35">add</tspan></text>
<text transform="translate(1273.0,1434) scale(1,1.135)" x="0" y="0" font-family="'Liberation Mono'" font-size="23.28" xml:space="preserve"><tspan fill="#7e7e2a" stroke="#7e7e2a" stroke-width="0.35">r3</tspan><tspan fill="#0a14e0" stroke="#0a14e0" stroke-width="0.35">=&gt;DAT_00021060</tspan></text>
<text transform="translate(765.7,1466) scale(1,1.135)" x="0" y="0" font-family="'Liberation Mono'" font-size="23.28" xml:space="preserve"><tspan fill="#000000" stroke="#000000" stroke-width="0.35">00010726</tspan></text>
<text transform="translate(891.5,1466) scale(1,1.135)" x="0" y="0" font-family="'Liberation Mono'" font-size="23.28" xml:space="preserve"><tspan fill="#0a14e0" stroke="#0a14e0" stroke-width="0.35">20 4a</tspan></text>
<text transform="translate(1112.5,1466) scale(1,1.135)" x="0" y="0" font-family="'Liberation Mono'" font-size="23.28" xml:space="preserve"><tspan fill="#0a0a78" stroke="#0a0a78" stroke-width="0.35">ldr</tspan></text>
<text transform="translate(1273.0,1466) scale(1,1.135)" x="0" y="0" font-family="'Liberation Mono'" font-size="23.28" xml:space="preserve"><tspan fill="#7e7e2a" stroke="#7e7e2a" stroke-width="0.35">r2</tspan><tspan fill="#000000" stroke="#000000" stroke-width="0.35">,[</tspan><tspan fill="#0a14e0" stroke="#0a14e0" stroke-width="0.35">DAT_000107a8</tspan><tspan fill="#000000" stroke="#000000" stroke-width="0.35">]</tspan></text>
<text transform="translate(765.7,1498) scale(1,1.135)" x="0" y="0" font-family="'Liberation Mono'" font-size="23.28" xml:space="preserve"><tspan fill="#000000" stroke="#000000" stroke-width="0.35">00010728</tspan></text>
<text transform="translate(891.5,1498) scale(1,1.135)" x="0" y="0" font-family="'Liberation Mono'" font-size="23.28" xml:space="preserve"><tspan fill="#0a14e0" stroke="#0a14e0" stroke-width="0.35">7a 44</tspan></text>
<text transform="translate(1112.5,1498) scale(1,1.135)" x="0" y="0" font-family="'Liberation Mono'" font-size="23.28" xml:space="preserve"><tspan fill="#0a0a78" stroke="#0a0a78" stroke-width="0.35">add</tspan></text>
<text transform="translate(1273.0,1498) scale(1,1.135)" x="0" y="0" font-family="'Liberation Mono'" font-size="23.28" xml:space="preserve"><tspan fill="#7e7e2a" stroke="#7e7e2a" stroke-width="0.35">r2</tspan><tspan fill="#0a14e0" stroke="#0a14e0" stroke-width="0.35">=&gt;DAT_00021054</tspan></text>
</g>
<rect x="766" y="836" width="3" height="29" fill="#e8a0a0" />
<path d="M471 844 H494" stroke="#000" stroke-width="2.5"/><polygon points="489,837 500,844 489,851" fill="#000"/>
<rect x="640" y="903" width="8" height="20" fill="#222222" />
<rect x="1493" y="785" width="18" height="37" rx="9" fill="#fafafa" stroke="#c4c4c4" stroke-width="1.5"/>
<rect x="1530" y="594" width="18" height="346" fill="#a8a8a8" />
<rect x="1530" y="817" width="18" height="18" fill="#a4eaa0" />
<rect x="1530" y="1035" width="18" height="9" fill="#a8a8a8" />
<rect x="1530" y="1106" width="18" height="34" fill="#a8a8a8" />
<rect x="1530" y="1208" width="18" height="9" fill="#a8a8a8" />
<rect x="1530" y="1266" width="18" height="15" fill="#a8a8a8" />
<rect x="1530" y="1286" width="18" height="20" fill="#a8a8a8" />
<rect x="1517" y="675" width="17" height="10" fill="#d8c8a0" stroke="#e8a040" stroke-width="2"/>
<rect x="1517" y="769" width="17" height="10" fill="#d8c8a0" stroke="#e8a040" stroke-width="2"/>
<rect x="1517" y="1293" width="17" height="13" fill="#d8c8a0" stroke="#e8a040" stroke-width="2"/>
<rect x="1517" y="704" width="17" height="8" fill="#c8a8a8" stroke="#c03030" stroke-width="2"/>
<rect x="1517" y="824" width="17" height="8" fill="#c8c8c8" />
<rect x="653" y="1498" width="331" height="17" rx="8.5" fill="#fafafa" stroke="#c4c4c4" stroke-width="1.5"/>
<rect x="1564" y="250" width="3" height="1274" fill="#ffffff" />
<rect x="1568" y="254" width="1533" height="2" fill="#7c7c7c" />
<rect x="1568" y="254" width="2" height="48" fill="#7c7c7c" />
<rect x="1570" y="256" width="1528" height="2" fill="#ffffff" />
<rect x="1570" y="256" width="2" height="44" fill="#ffffff" />
<linearGradient id="gDC" gradientUnits="userSpaceOnUse" x1="1572" x2="2660" y1="0" y2="0"><stop offset="0" stop-color="#3a5080"/><stop offset="0.30" stop-color="#3e5688"/><stop offset="0.62" stop-color="#7384a6"/><stop offset="1" stop-color="#e4e5e6"/></linearGradient>
<rect x="1572" y="258" width="1525" height="42" fill="#e8e8e8" />
<rect x="1572" y="258" width="1088" height="42" fill="url(#gDC)" />
<g transform="translate(1576,264)"><path d="M19 6 Q16 4.5 11 4.5 Q3.5 4.5 3.5 13 Q3.5 21.5 11 21.5 Q16 21.5 19 20" fill="none" stroke="#4a8cf8" stroke-width="6"/><path d="M29 14 Q25 12 24 16 L21.5 29 Q20.5 32 17.5 31" fill="none" stroke="#d030d8" stroke-width="3.2"/><path d="M20 19 H28" stroke="#d030d8" stroke-width="2.8"/></g>
<text xml:space="preserve" x="1612.8" y="288" font-family="'Liberation Sans'" font-size="27" fill="#ffffff" stroke="#ffffff" stroke-width="0.3" textLength="643.9" lengthAdjust="spacingAndGlyphs" >Decompile: UndefinedFunction_00010678 –  (auth)</text>
<g transform="translate(2676,264)"><path d="M6 14 A10 10 0 0 1 24 8" stroke="#40b040" stroke-width="6" fill="none"/><polygon points="20,2 30,6 24,14" fill="#40b040"/><path d="M26 18 A10 10 0 0 1 8 24" stroke="#40b040" stroke-width="6" fill="none"/><polygon points="12,30 2,26 8,18" fill="#40b040"/></g>
<g transform="translate(2719,264)"><rect x="13" y="1" width="8" height="8" fill="#8ab0f0" stroke="#5a80c0" stroke-width="1"/><path d="M17 9 V15 M5 15 H29 M5 15 V21 M17 15 V21 M29 15 V21" stroke="#777" stroke-width="1.5" fill="none"/><rect x="1" y="22" width="8" height="8" fill="#70b060"/><rect x="13" y="22" width="8" height="8" fill="#70b060"/><rect x="25" y="22" width="8" height="8" fill="#d04040"/></g>
<text x="2761" y="292" font-family="'Liberation Sans'" font-size="30" fill="#4a8ae8" stroke="#4a8ae8" stroke-width="1.2" textLength="34" lengthAdjust="spacingAndGlyphs">Ro</text>
<rect x="2811" y="262" width="1" height="36" fill="#d6d6d6" />
<g transform="translate(2834,265)"><rect x="1" y="1" width="18" height="22" fill="#fff" stroke="#c8c8c8" stroke-width="1.5"/><rect x="10" y="9" width="18" height="22" fill="#fff" stroke="#c8c8c8" stroke-width="1.5"/></g>
<rect x="2880" y="262" width="1" height="36" fill="#d6d6d6" />
<g transform="translate(2902,265)"><rect x="1" y="1" width="26" height="30" fill="#e8eef8" stroke="#6a8ad0" stroke-width="2"/><rect x="4" y="22" width="20" height="5" fill="#7a9ad0"/><path d="M8 24 L26 6 L30 10 L12 28 Z" fill="#f0c040" stroke="#a07020" stroke-width="1.5"/></g>
<rect x="2948" y="262" width="1" height="36" fill="#d6d6d6" />
<g transform="translate(2967,265)"><rect x="1" y="8" width="30" height="22" rx="3" fill="#333"/><rect x="9" y="3" width="14" height="7" fill="#555" stroke="#222"/><circle cx="16" cy="19" r="7" fill="#111" stroke="#888" stroke-width="2"/></g>
<rect x="3007" y="262" width="1" height="36" fill="#d6d6d6" />
<g transform="translate(3022,275)"><polygon points="0,0 14,0 7,7" fill="#000"/></g>
<path d="M3063 267 L3085 289 M3085 267 L3063 289" stroke="#000" stroke-width="4.5"/>
<rect x="1570" y="300" width="1528" height="2" fill="#7c7c7c" />
<rect x="1567" y="302" width="1531" height="1" fill="#ffffff" />
<rect x="1567" y="303" width="1531" height="1218" fill="#ffffff" />
<rect x="1567" y="303" width="33" height="1218" fill="#eeeeee" />
<rect x="3098" y="254" width="2" height="1267" fill="#9a9a9a" />
<rect x="3100" y="250" width="1" height="1274" fill="#ffffff" />
<rect x="3101" y="250" width="2" height="1277" fill="#727272" />
<rect x="1600" y="1520" width="1498" height="2" fill="#9a9a9a" />
<rect x="1564" y="1524" width="1539" height="3" fill="#727272" />
<rect x="1600" y="304" width="2" height="1217" fill="#8c8c8c" />
<rect x="1604" y="306" width="1400" height="1213" fill="#c0c0c0" />
<rect x="3073" y="748" width="18" height="719" rx="9" fill="#fafafa" stroke="#c4c4c4" stroke-width="1.5"/>
<rect x="1604" y="808" width="1400" height="34" fill="#aef89c" />
<rect x="1604" y="840" width="671" height="32" fill="#aef89c" />
<rect x="1634" y="808" width="83" height="30" fill="#d8f088" />
<rect x="1634" y="809" width="4" height="28" fill="#d02020" />
<clipPath id="cD"><rect x="1567" y="306" width="1437" height="1213"/></clipPath>
<g clip-path="url(#cD)">
<text transform="translate(1568.0,320) scale(1,1.135)" x="0" y="0" font-family="'Liberation Mono'" font-size="23.28" xml:space="preserve"><tspan fill="#000" stroke="#000" stroke-width="0.35">24</tspan></text>
<text transform="translate(1605.0,320) scale(1,1.135)" x="0" y="0" font-family="'Liberation Mono'" font-size="23.28" xml:space="preserve"><tspan fill="#000000" stroke="#000000" stroke-width="0.35">    </tspan><tspan fill="#0000e6" stroke="#0000e6" stroke-width="0.35">fprintf</tspan><tspan fill="#000000" stroke="#000000" stroke-width="0.35">(</tspan><tspan fill="#3a9090" stroke="#3a9090" stroke-width="0.35">stderr</tspan><tspan fill="#000000" stroke="#000000" stroke-width="0.35">,</tspan><tspan fill="#2a8a2a" stroke="#2a8a2a" stroke-width="0.35">&quot;Usage: %s &lt;username&gt; &lt;password&gt;\n&quot;</tspan><tspan fill="#000000" stroke="#000000" stroke-width="0.35">,*</tspan><tspan fill="#8a1a8a" stroke="#8a1a8a" stroke-width="0.35">param_2</tspan><tspan fill="#000000" stroke="#000000" stroke-width="0.35">);</tspan></text>
<text transform="translate(1568.0,352) scale(1,1.135)" x="0" y="0" font-family="'Liberation Mono'" font-size="23.28" xml:space="preserve"><tspan fill="#000" stroke="#000" stroke-width="0.35">25</tspan></text>
<text transform="translate(1605.0,352) scale(1,1.135)" x="0" y="0" font-family="'Liberation Mono'" font-size="23.28" xml:space="preserve"><tspan fill="#000000" stroke="#000000" stroke-width="0.35">                    </tspan><tspan fill="#8a40e0" stroke="#8a40e0" stroke-width="0.35">/* WARNING: Subroutine does not return */</tspan></text>
<text transform="translate(1568.0,384) scale(1,1.135)" x="0" y="0" font-family="'Liberation Mono'" font-size="23.28" xml:space="preserve"><tspan fill="#000" stroke="#000" stroke-width="0.35">26</tspan></text>
<text transform="translate(1605.0,384) scale(1,1.135)" x="0" y="0" font-family="'Liberation Mono'" font-size="23.28" xml:space="preserve"><tspan fill="#000000" stroke="#000000" stroke-width="0.35">    </tspan><tspan fill="#0000e6" stroke="#0000e6" stroke-width="0.35">exit</tspan><tspan fill="#000000" stroke="#000000" stroke-width="0.35">(</tspan><tspan fill="#2a8a2a" stroke="#2a8a2a" stroke-width="0.35">1</tspan><tspan fill="#000000" stroke="#000000" stroke-width="0.35">);</tspan></text>
<text transform="translate(1568.0,416) scale(1,1.135)" x="0" y="0" font-family="'Liberation Mono'" font-size="23.28" xml:space="preserve"><tspan fill="#000" stroke="#000" stroke-width="0.35">27</tspan></text>
<text transform="translate(1605.0,416) scale(1,1.135)" x="0" y="0" font-family="'Liberation Mono'" font-size="23.28" xml:space="preserve"><tspan fill="#000000" stroke="#000000" stroke-width="0.35">  }</tspan></text>
<text transform="translate(1568.0,448) scale(1,1.135)" x="0" y="0" font-family="'Liberation Mono'" font-size="23.28" xml:space="preserve"><tspan fill="#000" stroke="#000" stroke-width="0.35">28</tspan></text>
<text transform="translate(1605.0,448) scale(1,1.135)" x="0" y="0" font-family="'Liberation Mono'" font-size="23.28" xml:space="preserve"><tspan fill="#000000" stroke="#000000" stroke-width="0.35">  </tspan><tspan fill="#7f8a2c" stroke="#7f8a2c" stroke-width="0.35">uStack_34</tspan><tspan fill="#000000" stroke="#000000" stroke-width="0.35"> = </tspan><tspan fill="#2a8a2a" stroke="#2a8a2a" stroke-width="0.35">0</tspan><tspan fill="#000000" stroke="#000000" stroke-width="0.35">;</tspan></text>
<text transform="translate(1568.0,480) scale(1,1.135)" x="0" y="0" font-family="'Liberation Mono'" font-size="23.28" xml:space="preserve"><tspan fill="#000" stroke="#000" stroke-width="0.35">29</tspan></text>
<text transform="translate(1605.0,480) scale(1,1.135)" x="0" y="0" font-family="'Liberation Mono'" font-size="23.28" xml:space="preserve"><tspan fill="#000000" stroke="#000000" stroke-width="0.35">  </tspan><tspan fill="#7f8a2c" stroke="#7f8a2c" stroke-width="0.35">uStack_30</tspan><tspan fill="#000000" stroke="#000000" stroke-width="0.35"> = </tspan><tspan fill="#2a8a2a" stroke="#2a8a2a" stroke-width="0.35">0</tspan><tspan fill="#000000" stroke="#000000" stroke-width="0.35">;</tspan></text>
<text transform="translate(1568.0,512) scale(1,1.135)" x="0" y="0" font-family="'Liberation Mono'" font-size="23.28" xml:space="preserve"><tspan fill="#000" stroke="#000" stroke-width="0.35">30</tspan></text>
<text transform="translate(1605.0,512) scale(1,1.135)" x="0" y="0" font-family="'Liberation Mono'" font-size="23.28" xml:space="preserve"><tspan fill="#000000" stroke="#000000" stroke-width="0.35">  </tspan><tspan fill="#7f8a2c" stroke="#7f8a2c" stroke-width="0.35">uStack_28</tspan><tspan fill="#000000" stroke="#000000" stroke-width="0.35"> = </tspan><tspan fill="#2a8a2a" stroke="#2a8a2a" stroke-width="0.35">0</tspan><tspan fill="#000000" stroke="#000000" stroke-width="0.35">;</tspan></text>
<text transform="translate(1568.0,544) scale(1,1.135)" x="0" y="0" font-family="'Liberation Mono'" font-size="23.28" xml:space="preserve"><tspan fill="#000" stroke="#000" stroke-width="0.35">31</tspan></text>
<text transform="translate(1605.0,544) scale(1,1.135)" x="0" y="0" font-family="'Liberation Mono'" font-size="23.28" xml:space="preserve"><tspan fill="#000000" stroke="#000000" stroke-width="0.35">  </tspan><tspan fill="#7f8a2c" stroke="#7f8a2c" stroke-width="0.35">uStack_24</tspan><tspan fill="#000000" stroke="#000000" stroke-width="0.35"> = </tspan><tspan fill="#2a8a2a" stroke="#2a8a2a" stroke-width="0.35">0</tspan><tspan fill="#000000" stroke="#000000" stroke-width="0.35">;</tspan></text>
<text transform="translate(1568.0,576) scale(1,1.135)" x="0" y="0" font-family="'Liberation Mono'" font-size="23.28" xml:space="preserve"><tspan fill="#000" stroke="#000" stroke-width="0.35">32</tspan></text>
<text transform="translate(1605.0,576) scale(1,1.135)" x="0" y="0" font-family="'Liberation Mono'" font-size="23.28" xml:space="preserve"><tspan fill="#000000" stroke="#000000" stroke-width="0.35">  </tspan><tspan fill="#7f8a2c" stroke="#7f8a2c" stroke-width="0.35">uStack_20</tspan><tspan fill="#000000" stroke="#000000" stroke-width="0.35"> = </tspan><tspan fill="#2a8a2a" stroke="#2a8a2a" stroke-width="0.35">0</tspan><tspan fill="#000000" stroke="#000000" stroke-width="0.35">;</tspan></text>
<text transform="translate(1568.0,608) scale(1,1.135)" x="0" y="0" font-family="'Liberation Mono'" font-size="23.28" xml:space="preserve"><tspan fill="#000" stroke="#000" stroke-width="0.35">33</tspan></text>
<text transform="translate(1605.0,608) scale(1,1.135)" x="0" y="0" font-family="'Liberation Mono'" font-size="23.28" xml:space="preserve"><tspan fill="#000000" stroke="#000000" stroke-width="0.35">  </tspan><tspan fill="#7f8a2c" stroke="#7f8a2c" stroke-width="0.35">uStack_1c</tspan><tspan fill="#000000" stroke="#000000" stroke-width="0.35"> = </tspan><tspan fill="#2a8a2a" stroke="#2a8a2a" stroke-width="0.35">0</tspan><tspan fill="#000000" stroke="#000000" stroke-width="0.35">;</tspan></text>
<text transform="translate(1568.0,640) scale(1,1.135)" x="0" y="0" font-family="'Liberation Mono'" font-size="23.28" xml:space="preserve"><tspan fill="#000" stroke="#000" stroke-width="0.35">34</tspan></text>
<text transform="translate(1605.0,640) scale(1,1.135)" x="0" y="0" font-family="'Liberation Mono'" font-size="23.28" xml:space="preserve"><tspan fill="#000000" stroke="#000000" stroke-width="0.35">  </tspan><tspan fill="#7f8a2c" stroke="#7f8a2c" stroke-width="0.35">uStack_54</tspan><tspan fill="#000000" stroke="#000000" stroke-width="0.35"> = </tspan><tspan fill="#2a8a2a" stroke="#2a8a2a" stroke-width="0.35">0</tspan><tspan fill="#000000" stroke="#000000" stroke-width="0.35">;</tspan></text>
<text transform="translate(1568.0,672) scale(1,1.135)" x="0" y="0" font-family="'Liberation Mono'" font-size="23.28" xml:space="preserve"><tspan fill="#000" stroke="#000" stroke-width="0.35">35</tspan></text>
<text transform="translate(1605.0,672) scale(1,1.135)" x="0" y="0" font-family="'Liberation Mono'" font-size="23.28" xml:space="preserve"><tspan fill="#000000" stroke="#000000" stroke-width="0.35">  </tspan><tspan fill="#7f8a2c" stroke="#7f8a2c" stroke-width="0.35">uStack_50</tspan><tspan fill="#000000" stroke="#000000" stroke-width="0.35"> = </tspan><tspan fill="#2a8a2a" stroke="#2a8a2a" stroke-width="0.35">0</tspan><tspan fill="#000000" stroke="#000000" stroke-width="0.35">;</tspan></text>
<text transform="translate(1568.0,704) scale(1,1.135)" x="0" y="0" font-family="'Liberation Mono'" font-size="23.28" xml:space="preserve"><tspan fill="#000" stroke="#000" stroke-width="0.35">36</tspan></text>
<text transform="translate(1605.0,704) scale(1,1.135)" x="0" y="0" font-family="'Liberation Mono'" font-size="23.28" xml:space="preserve"><tspan fill="#000000" stroke="#000000" stroke-width="0.35">  </tspan><tspan fill="#7f8a2c" stroke="#7f8a2c" stroke-width="0.35">uStack_48</tspan><tspan fill="#000000" stroke="#000000" stroke-width="0.35"> = </tspan><tspan fill="#2a8a2a" stroke="#2a8a2a" stroke-width="0.35">0</tspan><tspan fill="#000000" stroke="#000000" stroke-width="0.35">;</tspan></text>
<text transform="translate(1568.0,736) scale(1,1.135)" x="0" y="0" font-family="'Liberation Mono'" font-size="23.28" xml:space="preserve"><tspan fill="#000" stroke="#000" stroke-width="0.35">37</tspan></text>
<text transform="translate(1605.0,736) scale(1,1.135)" x="0" y="0" font-family="'Liberation Mono'" font-size="23.28" xml:space="preserve"><tspan fill="#000000" stroke="#000000" stroke-width="0.35">  </tspan><tspan fill="#7f8a2c" stroke="#7f8a2c" stroke-width="0.35">uStack_44</tspan><tspan fill="#000000" stroke="#000000" stroke-width="0.35"> = </tspan><tspan fill="#2a8a2a" stroke="#2a8a2a" stroke-width="0.35">0</tspan><tspan fill="#000000" stroke="#000000" stroke-width="0.35">;</tspan></text>
<text transform="translate(1568.0,768) scale(1,1.135)" x="0" y="0" font-family="'Liberation Mono'" font-size="23.28" xml:space="preserve"><tspan fill="#000" stroke="#000" stroke-width="0.35">38</tspan></text>
<text transform="translate(1605.0,768) scale(1,1.135)" x="0" y="0" font-family="'Liberation Mono'" font-size="23.28" xml:space="preserve"><tspan fill="#000000" stroke="#000000" stroke-width="0.35">  </tspan><tspan fill="#7f8a2c" stroke="#7f8a2c" stroke-width="0.35">uStack_40</tspan><tspan fill="#000000" stroke="#000000" stroke-width="0.35"> = </tspan><tspan fill="#2a8a2a" stroke="#2a8a2a" stroke-width="0.35">0</tspan><tspan fill="#000000" stroke="#000000" stroke-width="0.35">;</tspan></text>
<text transform="translate(1568.0,800) scale(1,1.135)" x="0" y="0" font-family="'Liberation Mono'" font-size="23.28" xml:space="preserve"><tspan fill="#000" stroke="#000" stroke-width="0.35">39</tspan></text>
<text transform="translate(1605.0,800) scale(1,1.135)" x="0" y="0" font-family="'Liberation Mono'" font-size="23.28" xml:space="preserve"><tspan fill="#000000" stroke="#000000" stroke-width="0.35">  </tspan><tspan fill="#7f8a2c" stroke="#7f8a2c" stroke-width="0.35">uStack_3c</tspan><tspan fill="#000000" stroke="#000000" stroke-width="0.35"> = </tspan><tspan fill="#2a8a2a" stroke="#2a8a2a" stroke-width="0.35">0</tspan><tspan fill="#000000" stroke="#000000" stroke-width="0.35">;</tspan></text>
<text transform="translate(1568.0,832) scale(1,1.135)" x="0" y="0" font-family="'Liberation Mono'" font-size="23.28" xml:space="preserve"><tspan fill="#000" stroke="#000" stroke-width="0.35">40</tspan></text>
<text transform="translate(1605.0,832) scale(1,1.135)" x="0" y="0" font-family="'Liberation Mono'" font-size="23.28" xml:space="preserve"><tspan fill="#000000" stroke="#000000" stroke-width="0.35">  </tspan><tspan fill="#0000e6" stroke="#0000e6" stroke-width="0.35">strcpy</tspan><tspan fill="#000000" stroke="#000000" stroke-width="0.35">((</tspan><tspan fill="#0a1ad8" stroke="#0a1ad8" stroke-width="0.35">char</tspan><tspan fill="#000000" stroke="#000000" stroke-width="0.35"> *)&amp;</tspan><tspan fill="#7f8a2c" stroke="#7f8a2c" stroke-width="0.35">uStack_34</tspan><tspan fill="#000000" stroke="#000000" stroke-width="0.35">,(</tspan><tspan fill="#0a1ad8" stroke="#0a1ad8" stroke-width="0.35">char</tspan><tspan fill="#000000" stroke="#000000" stroke-width="0.35"> *)</tspan><tspan fill="#8a1a8a" stroke="#8a1a8a" stroke-width="0.35">param_2</tspan><tspan fill="#000000" stroke="#000000" stroke-width="0.35">[</tspan><tspan fill="#2a8a2a" stroke="#2a8a2a" stroke-width="0.35">1</tspan><tspan fill="#000000" stroke="#000000" stroke-width="0.35">]);</tspan></text>
<text transform="translate(1568.0,864) scale(1,1.135)" x="0" y="0" font-family="'Liberation Mono'" font-size="23.28" xml:space="preserve"><tspan fill="#000" stroke="#000" stroke-width="0.35">41</tspan></text>
<text transform="translate(1605.0,864) scale(1,1.135)" x="0" y="0" font-family="'Liberation Mono'" font-size="23.28" xml:space="preserve"><tspan fill="#000000" stroke="#000000" stroke-width="0.35">  </tspan><tspan fill="#0000e6" stroke="#0000e6" stroke-width="0.35">strcpy</tspan><tspan fill="#000000" stroke="#000000" stroke-width="0.35">((</tspan><tspan fill="#0a1ad8" stroke="#0a1ad8" stroke-width="0.35">char</tspan><tspan fill="#000000" stroke="#000000" stroke-width="0.35"> *)&amp;</tspan><tspan fill="#7f8a2c" stroke="#7f8a2c" stroke-width="0.35">uStack_54</tspan><tspan fill="#000000" stroke="#000000" stroke-width="0.35">,(</tspan><tspan fill="#0a1ad8" stroke="#0a1ad8" stroke-width="0.35">char</tspan><tspan fill="#000000" stroke="#000000" stroke-width="0.35"> *)</tspan><tspan fill="#8a1a8a" stroke="#8a1a8a" stroke-width="0.35">param_2</tspan><tspan fill="#000000" stroke="#000000" stroke-width="0.35">[</tspan><tspan fill="#2a8a2a" stroke="#2a8a2a" stroke-width="0.35">2</tspan><tspan fill="#000000" stroke="#000000" stroke-width="0.35">]);</tspan></text>
<text transform="translate(1568.0,896) scale(1,1.135)" x="0" y="0" font-family="'Liberation Mono'" font-size="23.28" xml:space="preserve"><tspan fill="#000" stroke="#000" stroke-width="0.35">42</tspan></text>
<text transform="translate(1605.0,896) scale(1,1.135)" x="0" y="0" font-family="'Liberation Mono'" font-size="23.28" xml:space="preserve"><tspan fill="#000000" stroke="#000000" stroke-width="0.35">  </tspan><tspan fill="#7f8a2c" stroke="#7f8a2c" stroke-width="0.35">uStack_10</tspan><tspan fill="#000000" stroke="#000000" stroke-width="0.35"> = </tspan><tspan fill="#2a8a2a" stroke="#2a8a2a" stroke-width="0.35">0</tspan><tspan fill="#000000" stroke="#000000" stroke-width="0.35">;</tspan></text>
<text transform="translate(1568.0,928) scale(1,1.135)" x="0" y="0" font-family="'Liberation Mono'" font-size="23.28" xml:space="preserve"><tspan fill="#000" stroke="#000" stroke-width="0.35">43</tspan></text>
<text transform="translate(1605.0,928) scale(1,1.135)" x="0" y="0" font-family="'Liberation Mono'" font-size="23.28" xml:space="preserve"><tspan fill="#000000" stroke="#000000" stroke-width="0.35">  </tspan><tspan fill="#7f8a2c" stroke="#7f8a2c" stroke-width="0.35">iStack_14</tspan><tspan fill="#000000" stroke="#000000" stroke-width="0.35"> = </tspan><tspan fill="#2a8a2a" stroke="#2a8a2a" stroke-width="0.35">0</tspan><tspan fill="#000000" stroke="#000000" stroke-width="0.35">;</tspan></text>
<text transform="translate(1568.0,960) scale(1,1.135)" x="0" y="0" font-family="'Liberation Mono'" font-size="23.28" xml:space="preserve"><tspan fill="#000" stroke="#000" stroke-width="0.35">44</tspan></text>
<text transform="translate(1605.0,960) scale(1,1.135)" x="0" y="0" font-family="'Liberation Mono'" font-size="23.28" xml:space="preserve"><tspan fill="#000000" stroke="#000000" stroke-width="0.35">  </tspan><tspan fill="#3a9090" stroke="#3a9090" stroke-width="0.35">DAT_00021058</tspan><tspan fill="#000000" stroke="#000000" stroke-width="0.35"> = &amp;</tspan><tspan fill="#7f8a2c" stroke="#7f8a2c" stroke-width="0.35">uStack_54</tspan><tspan fill="#000000" stroke="#000000" stroke-width="0.35">;</tspan></text>
<text transform="translate(1568.0,992) scale(1,1.135)" x="0" y="0" font-family="'Liberation Mono'" font-size="23.28" xml:space="preserve"><tspan fill="#000" stroke="#000" stroke-width="0.35">45</tspan></text>
<text transform="translate(1605.0,992) scale(1,1.135)" x="0" y="0" font-family="'Liberation Mono'" font-size="23.28" xml:space="preserve"><tspan fill="#000000" stroke="#000000" stroke-width="0.35">  </tspan><tspan fill="#7f8a2c" stroke="#7f8a2c" stroke-width="0.35">iStack_c</tspan><tspan fill="#000000" stroke="#000000" stroke-width="0.35"> = </tspan><tspan fill="#0000e6" stroke="#0000e6" stroke-width="0.35">pam_start</tspan><tspan fill="#000000" stroke="#000000" stroke-width="0.35">(</tspan><tspan fill="#2a8a2a" stroke="#2a8a2a" stroke-width="0.35">&quot;login&quot;</tspan><tspan fill="#000000" stroke="#000000" stroke-width="0.35">,&amp;</tspan><tspan fill="#7f8a2c" stroke="#7f8a2c" stroke-width="0.35">uStack_34</tspan><tspan fill="#000000" stroke="#000000" stroke-width="0.35">,&amp;</tspan><tspan fill="#3a9090" stroke="#3a9090" stroke-width="0.35">DAT_00021054</tspan><tspan fill="#000000" stroke="#000000" stroke-width="0.35">,&amp;</tspan><tspan fill="#3a9090" stroke="#3a9090" stroke-width="0.35">DAT_00021060</tspan><tspan fill="#000000" stroke="#000000" stroke-width="0.35">);</tspan></text>
<text transform="translate(1568.0,1024) scale(1,1.135)" x="0" y="0" font-family="'Liberation Mono'" font-size="23.28" xml:space="preserve"><tspan fill="#000" stroke="#000" stroke-width="0.35">46</tspan></text>
<text transform="translate(1605.0,1024) scale(1,1.135)" x="0" y="0" font-family="'Liberation Mono'" font-size="23.28" xml:space="preserve"><tspan fill="#000000" stroke="#000000" stroke-width="0.35">  </tspan><tspan fill="#0000e6" stroke="#0000e6" stroke-width="0.35">if</tspan><tspan fill="#000000" stroke="#000000" stroke-width="0.35"> (</tspan><tspan fill="#7f8a2c" stroke="#7f8a2c" stroke-width="0.35">iStack_c</tspan><tspan fill="#000000" stroke="#000000" stroke-width="0.35"> != </tspan><tspan fill="#2a8a2a" stroke="#2a8a2a" stroke-width="0.35">0</tspan><tspan fill="#000000" stroke="#000000" stroke-width="0.35">) {</tspan></text>
<text transform="translate(1568.0,1056) scale(1,1.135)" x="0" y="0" font-family="'Liberation Mono'" font-size="23.28" xml:space="preserve"><tspan fill="#000" stroke="#000" stroke-width="0.35">47</tspan></text>
<text transform="translate(1605.0,1056) scale(1,1.135)" x="0" y="0" font-family="'Liberation Mono'" font-size="23.28" xml:space="preserve"><tspan fill="#000000" stroke="#000000" stroke-width="0.35">    </tspan><tspan fill="#0000e6" stroke="#0000e6" stroke-width="0.35">FUN_000107b8</tspan><tspan fill="#000000" stroke="#000000" stroke-width="0.35">(</tspan><tspan fill="#2a8a2a" stroke="#2a8a2a" stroke-width="0.35">1</tspan><tspan fill="#000000" stroke="#000000" stroke-width="0.35">);</tspan></text>
<text transform="translate(1568.0,1088) scale(1,1.135)" x="0" y="0" font-family="'Liberation Mono'" font-size="23.28" xml:space="preserve"><tspan fill="#000" stroke="#000" stroke-width="0.35">48</tspan></text>
<text transform="translate(1605.0,1088) scale(1,1.135)" x="0" y="0" font-family="'Liberation Mono'" font-size="23.28" xml:space="preserve"><tspan fill="#000000" stroke="#000000" stroke-width="0.35">  }</tspan></text>
<text transform="translate(1568.0,1120) scale(1,1.135)" x="0" y="0" font-family="'Liberation Mono'" font-size="23.28" xml:space="preserve"><tspan fill="#000" stroke="#000" stroke-width="0.35">49</tspan></text>
<text transform="translate(1605.0,1120) scale(1,1.135)" x="0" y="0" font-family="'Liberation Mono'" font-size="23.28" xml:space="preserve"><tspan fill="#000000" stroke="#000000" stroke-width="0.35">  </tspan><tspan fill="#0000e6" stroke="#0000e6" stroke-width="0.35">for</tspan><tspan fill="#000000" stroke="#000000" stroke-width="0.35"> (; (</tspan><tspan fill="#7f8a2c" stroke="#7f8a2c" stroke-width="0.35">uStack_10</tspan><tspan fill="#000000" stroke="#000000" stroke-width="0.35"> == </tspan><tspan fill="#2a8a2a" stroke="#2a8a2a" stroke-width="0.35">0</tspan><tspan fill="#000000" stroke="#000000" stroke-width="0.35"> &amp;&amp; (</tspan><tspan fill="#7f8a2c" stroke="#7f8a2c" stroke-width="0.35">iStack_14</tspan><tspan fill="#000000" stroke="#000000" stroke-width="0.35"> &lt; </tspan><tspan fill="#2a8a2a" stroke="#2a8a2a" stroke-width="0.35">1</tspan><tspan fill="#000000" stroke="#000000" stroke-width="0.35">)); </tspan><tspan fill="#7f8a2c" stroke="#7f8a2c" stroke-width="0.35">iStack_14</tspan><tspan fill="#000000" stroke="#000000" stroke-width="0.35"> = </tspan><tspan fill="#7f8a2c" stroke="#7f8a2c" stroke-width="0.35">iStack_14</tspan><tspan fill="#000000" stroke="#000000" stroke-width="0.35"> + </tspan><tspan fill="#2a8a2a" stroke="#2a8a2a" stroke-width="0.35">1</tspan><tspan fill="#000000" stroke="#000000" stroke-width="0.35">) {</tspan></text>
<text transform="translate(1568.0,1152) scale(1,1.135)" x="0" y="0" font-family="'Liberation Mono'" font-size="23.28" xml:space="preserve"><tspan fill="#000" stroke="#000" stroke-width="0.35">50</tspan></text>
<text transform="translate(1605.0,1152) scale(1,1.135)" x="0" y="0" font-family="'Liberation Mono'" font-size="23.28" xml:space="preserve"><tspan fill="#000000" stroke="#000000" stroke-width="0.35">    </tspan><tspan fill="#7f8a2c" stroke="#7f8a2c" stroke-width="0.35">iStack_c</tspan><tspan fill="#000000" stroke="#000000" stroke-width="0.35"> = </tspan><tspan fill="#0000e6" stroke="#0000e6" stroke-width="0.35">pam_authenticate</tspan><tspan fill="#000000" stroke="#000000" stroke-width="0.35">(</tspan><tspan fill="#3a9090" stroke="#3a9090" stroke-width="0.35">DAT_00021060</tspan><tspan fill="#000000" stroke="#000000" stroke-width="0.35">,</tspan><tspan fill="#2a8a2a" stroke="#2a8a2a" stroke-width="0.35">0</tspan><tspan fill="#000000" stroke="#000000" stroke-width="0.35">);</tspan></text>
<text transform="translate(1568.0,1184) scale(1,1.135)" x="0" y="0" font-family="'Liberation Mono'" font-size="23.28" xml:space="preserve"><tspan fill="#000" stroke="#000" stroke-width="0.35">51</tspan></text>
<text transform="translate(1605.0,1184) scale(1,1.135)" x="0" y="0" font-family="'Liberation Mono'" font-size="23.28" xml:space="preserve"><tspan fill="#000000" stroke="#000000" stroke-width="0.35">    </tspan><tspan fill="#7f8a2c" stroke="#7f8a2c" stroke-width="0.35">iVar2</tspan><tspan fill="#000000" stroke="#000000" stroke-width="0.35"> = </tspan><tspan fill="#7f8a2c" stroke="#7f8a2c" stroke-width="0.35">iStack_c</tspan><tspan fill="#000000" stroke="#000000" stroke-width="0.35">;</tspan></text>
<text transform="translate(1568.0,1216) scale(1,1.135)" x="0" y="0" font-family="'Liberation Mono'" font-size="23.28" xml:space="preserve"><tspan fill="#000" stroke="#000" stroke-width="0.35">52</tspan></text>
<text transform="translate(1605.0,1216) scale(1,1.135)" x="0" y="0" font-family="'Liberation Mono'" font-size="23.28" xml:space="preserve"><tspan fill="#000000" stroke="#000000" stroke-width="0.35">    </tspan><tspan fill="#0000e6" stroke="#0000e6" stroke-width="0.35">if</tspan><tspan fill="#000000" stroke="#000000" stroke-width="0.35"> (</tspan><tspan fill="#7f8a2c" stroke="#7f8a2c" stroke-width="0.35">iStack_c</tspan><tspan fill="#000000" stroke="#000000" stroke-width="0.35"> == </tspan><tspan fill="#2a8a2a" stroke="#2a8a2a" stroke-width="0.35">0</tspan><tspan fill="#000000" stroke="#000000" stroke-width="0.35">) {</tspan></text>
<text transform="translate(1568.0,1248) scale(1,1.135)" x="0" y="0" font-family="'Liberation Mono'" font-size="23.28" xml:space="preserve"><tspan fill="#000" stroke="#000" stroke-width="0.35">53</tspan></text>
<text transform="translate(1605.0,1248) scale(1,1.135)" x="0" y="0" font-family="'Liberation Mono'" font-size="23.28" xml:space="preserve"><tspan fill="#000000" stroke="#000000" stroke-width="0.35">      </tspan><tspan fill="#7f8a2c" stroke="#7f8a2c" stroke-width="0.35">iVar2</tspan><tspan fill="#000000" stroke="#000000" stroke-width="0.35"> = </tspan><tspan fill="#2a8a2a" stroke="#2a8a2a" stroke-width="0.35">1</tspan><tspan fill="#000000" stroke="#000000" stroke-width="0.35">;</tspan></text>
<text transform="translate(1568.0,1280) scale(1,1.135)" x="0" y="0" font-family="'Liberation Mono'" font-size="23.28" xml:space="preserve"><tspan fill="#000" stroke="#000" stroke-width="0.35">54</tspan></text>
<text transform="translate(1605.0,1280) scale(1,1.135)" x="0" y="0" font-family="'Liberation Mono'" font-size="23.28" xml:space="preserve"><tspan fill="#000000" stroke="#000000" stroke-width="0.35">    }</tspan></text>
<text transform="translate(1568.0,1312) scale(1,1.135)" x="0" y="0" font-family="'Liberation Mono'" font-size="23.28" xml:space="preserve"><tspan fill="#000" stroke="#000" stroke-width="0.35">55</tspan></text>
<text transform="translate(1605.0,1312) scale(1,1.135)" x="0" y="0" font-family="'Liberation Mono'" font-size="23.28" xml:space="preserve"><tspan fill="#000000" stroke="#000000" stroke-width="0.35">    </tspan><tspan fill="#7f8a2c" stroke="#7f8a2c" stroke-width="0.35">bVar1</tspan><tspan fill="#000000" stroke="#000000" stroke-width="0.35"> = (</tspan><tspan fill="#0a1ad8" stroke="#0a1ad8" stroke-width="0.35">byte</tspan><tspan fill="#000000" stroke="#000000" stroke-width="0.35">)</tspan><tspan fill="#7f8a2c" stroke="#7f8a2c" stroke-width="0.35">iVar2</tspan><tspan fill="#000000" stroke="#000000" stroke-width="0.35">;</tspan></text>
<text transform="translate(1568.0,1344) scale(1,1.135)" x="0" y="0" font-family="'Liberation Mono'" font-size="23.28" xml:space="preserve"><tspan fill="#000" stroke="#000" stroke-width="0.35">56</tspan></text>
<text transform="translate(1605.0,1344) scale(1,1.135)" x="0" y="0" font-family="'Liberation Mono'" font-size="23.28" xml:space="preserve"><tspan fill="#000000" stroke="#000000" stroke-width="0.35">    </tspan><tspan fill="#0000e6" stroke="#0000e6" stroke-width="0.35">if</tspan><tspan fill="#000000" stroke="#000000" stroke-width="0.35"> (</tspan><tspan fill="#7f8a2c" stroke="#7f8a2c" stroke-width="0.35">iStack_c</tspan><tspan fill="#000000" stroke="#000000" stroke-width="0.35"> != </tspan><tspan fill="#2a8a2a" stroke="#2a8a2a" stroke-width="0.35">0</tspan><tspan fill="#000000" stroke="#000000" stroke-width="0.35">) {</tspan></text>
<text transform="translate(1568.0,1376) scale(1,1.135)" x="0" y="0" font-family="'Liberation Mono'" font-size="23.28" xml:space="preserve"><tspan fill="#000" stroke="#000" stroke-width="0.35">57</tspan></text>
<text transform="translate(1605.0,1376) scale(1,1.135)" x="0" y="0" font-family="'Liberation Mono'" font-size="23.28" xml:space="preserve"><tspan fill="#000000" stroke="#000000" stroke-width="0.35">      </tspan><tspan fill="#7f8a2c" stroke="#7f8a2c" stroke-width="0.35">bVar1</tspan><tspan fill="#000000" stroke="#000000" stroke-width="0.35"> = </tspan><tspan fill="#2a8a2a" stroke="#2a8a2a" stroke-width="0.35">0</tspan><tspan fill="#000000" stroke="#000000" stroke-width="0.35">;</tspan></text>
<text transform="translate(1568.0,1408) scale(1,1.135)" x="0" y="0" font-family="'Liberation Mono'" font-size="23.28" xml:space="preserve"><tspan fill="#000" stroke="#000" stroke-width="0.35">58</tspan></text>
<text transform="translate(1605.0,1408) scale(1,1.135)" x="0" y="0" font-family="'Liberation Mono'" font-size="23.28" xml:space="preserve"><tspan fill="#000000" stroke="#000000" stroke-width="0.35">    }</tspan></text>
<text transform="translate(1568.0,1440) scale(1,1.135)" x="0" y="0" font-family="'Liberation Mono'" font-size="23.28" xml:space="preserve"><tspan fill="#000" stroke="#000" stroke-width="0.35">59</tspan></text>
<text transform="translate(1605.0,1440) scale(1,1.135)" x="0" y="0" font-family="'Liberation Mono'" font-size="23.28" xml:space="preserve"><tspan fill="#000000" stroke="#000000" stroke-width="0.35">    </tspan><tspan fill="#7f8a2c" stroke="#7f8a2c" stroke-width="0.35">uStack_10</tspan><tspan fill="#000000" stroke="#000000" stroke-width="0.35"> = (</tspan><tspan fill="#0a1ad8" stroke="#0a1ad8" stroke-width="0.35">uint</tspan><tspan fill="#000000" stroke="#000000" stroke-width="0.35">)</tspan><tspan fill="#7f8a2c" stroke="#7f8a2c" stroke-width="0.35">bVar1</tspan><tspan fill="#000000" stroke="#000000" stroke-width="0.35">;</tspan></text>
<text transform="translate(1568.0,1472) scale(1,1.135)" x="0" y="0" font-family="'Liberation Mono'" font-size="23.28" xml:space="preserve"><tspan fill="#000" stroke="#000" stroke-width="0.35">60</tspan></text>
<text transform="translate(1605.0,1472) scale(1,1.135)" x="0" y="0" font-family="'Liberation Mono'" font-size="23.28" xml:space="preserve"><tspan fill="#000000" stroke="#000000" stroke-width="0.35">  }</tspan></text>
<text transform="translate(1568.0,1504) scale(1,1.135)" x="0" y="0" font-family="'Liberation Mono'" font-size="23.28" xml:space="preserve"><tspan fill="#000" stroke="#000" stroke-width="0.35">61</tspan></text>
<text transform="translate(1605.0,1504) scale(1,1.135)" x="0" y="0" font-family="'Liberation Mono'" font-size="23.28" xml:space="preserve"><tspan fill="#000000" stroke="#000000" stroke-width="0.35">  </tspan><tspan fill="#0000e6" stroke="#0000e6" stroke-width="0.35">pam_end</tspan><tspan fill="#000000" stroke="#000000" stroke-width="0.35">(</tspan><tspan fill="#3a9090" stroke="#3a9090" stroke-width="0.35">DAT_00021060</tspan><tspan fill="#000000" stroke="#000000" stroke-width="0.35">,</tspan><tspan fill="#2a8a2a" stroke="#2a8a2a" stroke-width="0.35">0</tspan><tspan fill="#000000" stroke="#000000" stroke-width="0.35">);</tspan></text>
<text transform="translate(1568.0,1536) scale(1,1.135)" x="0" y="0" font-family="'Liberation Mono'" font-size="23.28" xml:space="preserve"><tspan fill="#000" stroke="#000" stroke-width="0.35">62</tspan></text>
<text transform="translate(1605.0,1536) scale(1,1.135)" x="0" y="0" font-family="'Liberation Mono'" font-size="23.28" xml:space="preserve"><tspan fill="#000000" stroke="#000000" stroke-width="0.35">  </tspan><tspan fill="#0000e6" stroke="#0000e6" stroke-width="0.35">return</tspan><tspan fill="#000000" stroke="#000000" stroke-width="0.35"> </tspan><tspan fill="#7f8a2c" stroke="#7f8a2c" stroke-width="0.35">iStack_c</tspan><tspan fill="#000000" stroke="#000000" stroke-width="0.35">;</tspan></text>
</g>
<rect x="464" y="1536" width="3" height="346" fill="#ffffff" />
<rect x="468" y="1540" width="2632" height="2" fill="#7c7c7c" />
<rect x="468" y="1540" width="2" height="48" fill="#7c7c7c" />
<rect x="470" y="1542" width="2628" height="2" fill="#ffffff" />
<rect x="470" y="1542" width="2" height="44" fill="#ffffff" />
<rect x="3098" y="1540" width="2" height="340" fill="#9a9a9a" />
<rect x="3100" y="1536" width="1" height="346" fill="#ffffff" />
<rect x="3101" y="1536" width="2" height="349" fill="#727272" />
<linearGradient id="gCS" gradientUnits="userSpaceOnUse" x1="472" x2="2960" y1="0" y2="0"><stop offset="0" stop-color="#aaaaaa"/><stop offset="0.4" stop-color="#adadad"/><stop offset="1" stop-color="#e6e6e6"/></linearGradient>
<rect x="472" y="1544" width="2626" height="42" fill="url(#gCS)" />
<rect x="479" y="1550" width="24" height="20" fill="#6a8ad8" stroke="#cfd8e8" stroke-width="2"/><rect x="489" y="1570" width="4" height="5" fill="#ddd"/><rect x="482" y="1575" width="18" height="3" fill="#fff"/>
<text xml:space="preserve" x="513.6" y="1574" font-family="'Liberation Sans'" font-size="27" fill="#000" stroke="#000" stroke-width="0.3" textLength="247.1" lengthAdjust="spacingAndGlyphs" >Console – Scripting</text>
<g transform="translate(2969,1548)"><path d="M8 14 V9 A8 8 0 0 1 24 9 V14" stroke="#999" stroke-width="3" fill="none"/><rect x="3" y="14" width="26" height="17" fill="#e8c050" stroke="#a08030" stroke-width="1.5"/><rect x="10" y="19" width="4" height="4" fill="#a08030"/><rect x="18" y="19" width="4" height="4" fill="#a08030"/></g>
<g transform="translate(3014,1548)"><path d="M8 30 L2 24 L20 2 L30 8 Z" fill="#f0c040" stroke="#806020" stroke-width="1.5"/><path d="M2 24 L8 30 L14 24 L8 18 Z" fill="#e0a0a0"/></g>
<rect x="3050" y="1550" width="1" height="34" fill="#d6d6d6" />
<path d="M3064 1552 L3086 1574 M3086 1552 L3064 1574" stroke="#000" stroke-width="4.5"/>
<rect x="470" y="1586" width="2628" height="3" fill="#8a8a8a" />
<rect x="467" y="1589" width="3" height="291" fill="#c8c8c8" />
<rect x="470" y="1589" width="2628" height="289" fill="#ffffff" />
<rect x="467" y="1878" width="2633" height="2" fill="#c8c8c8" />
<rect x="467" y="1880" width="2633" height="2" fill="#ffffff" />
<rect x="464" y="1882" width="2639" height="3" fill="#6e6e6e" />
<rect x="112" y="1885" width="2992" height="57" fill="#eeeeee" />
<circle cx="134" cy="1916" r="14.5" fill="#fff" stroke="#555" stroke-width="2" stroke-dasharray="3 1.5"/><path d="M122 1919 L132 1909 L139 1905 L145 1910 L147 1922 L143 1924 L140 1915 L136 1919 L134 1927 L130 1925 L131 1919 L125 1921 Z" fill="#e03020"/>
<rect x="156" y="1892" width="1936" height="2.5" fill="#7a7a7a" />
<rect x="156" y="1892" width="2.5" height="49" fill="#7a7a7a" />
<rect x="156" y="1939" width="1936" height="2" fill="#ffffff" />
<rect x="2090" y="1892" width="2" height="49" fill="#ffffff" />
<rect x="2100" y="1892" width="204" height="2.5" fill="#7a7a7a" />
<rect x="2100" y="1892" width="2.5" height="49" fill="#7a7a7a" />
<rect x="2100" y="1939" width="204" height="2" fill="#ffffff" />
<rect x="2302" y="1892" width="2" height="49" fill="#ffffff" />
<rect x="2311" y="1892" width="275" height="2.5" fill="#7a7a7a" />
<rect x="2311" y="1892" width="2.5" height="49" fill="#7a7a7a" />
<rect x="2311" y="1939" width="275" height="2" fill="#ffffff" />
<rect x="2584" y="1892" width="2" height="49" fill="#ffffff" />
<rect x="2594" y="1892" width="414" height="2.5" fill="#7a7a7a" />
<rect x="2594" y="1892" width="2.5" height="49" fill="#7a7a7a" />
<rect x="2594" y="1939" width="414" height="2" fill="#ffffff" />
<rect x="3006" y="1892" width="2" height="49" fill="#ffffff" />
<rect x="3015" y="1892" width="47" height="2.5" fill="#7a7a7a" />
<rect x="3015" y="1892" width="2.5" height="49" fill="#7a7a7a" />
<rect x="3015" y="1939" width="47" height="2" fill="#ffffff" />
<rect x="3060" y="1892" width="2" height="49" fill="#ffffff" />
<text xml:space="preserve" x="2106.8" y="1926" font-family="'Liberation Sans'" font-size="29.5" fill="#000" stroke="#000" stroke-width="0.3" textLength="123.9" lengthAdjust="spacingAndGlyphs" >000106f0</text>
<text xml:space="preserve" x="2609.7" y="1926" font-family="'Liberation Sans'" font-size="29.5" fill="#000" stroke="#000" stroke-width="0.3" textLength="208.1" lengthAdjust="spacingAndGlyphs" >blx 0x00010560</text>
</g>
<path d="M112.5 132 V98 A21.5 21.5 0 0 1 134 76.5 H3082 A21.5 21.5 0 0 1 3103.5 98 V132" fill="none" stroke="#9a9a9a" stroke-width="1.2"/></svg>
</body></html>
